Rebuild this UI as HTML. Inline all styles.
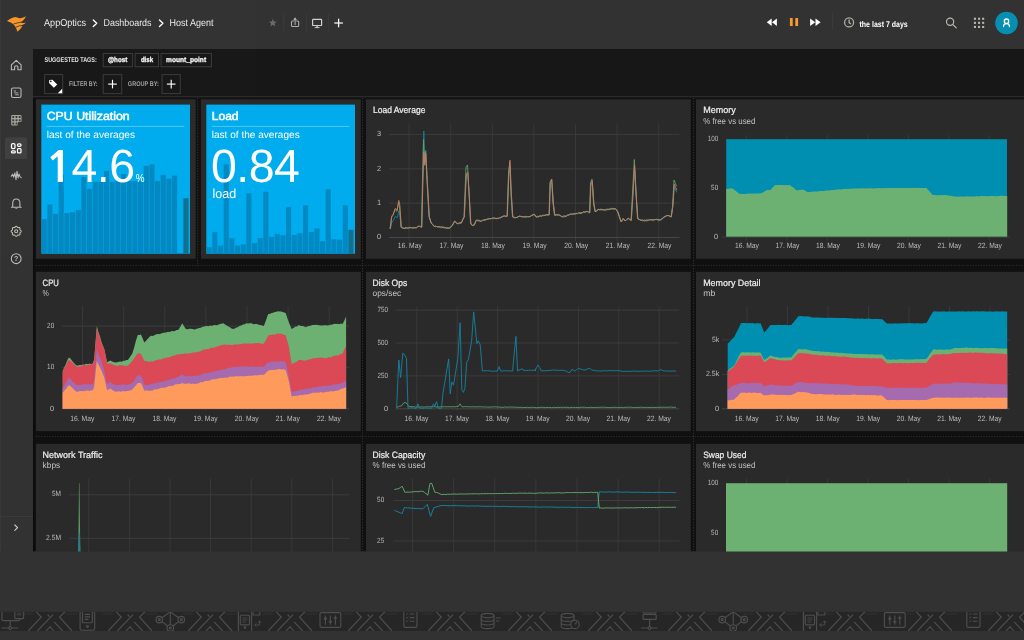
<!DOCTYPE html>
<html lang="en"><head><meta charset="utf-8"><title>AppOptics - Host Agent</title>
<style>
html,body{margin:0;padding:0;background:#333;width:1024px;height:640px;overflow:hidden;font-family:"Liberation Sans",sans-serif;}
svg{display:block;position:absolute;left:0;top:0;will-change:transform;opacity:0.999}
</style></head><body>
<svg width="1024" height="640" viewBox="0 0 1024 640" font-family="Liberation Sans, sans-serif" text-rendering="geometricPrecision">
<rect x="0.00" y="0.00" width="1024.00" height="640.00" fill="#111111"/>
<rect x="33.00" y="49.00" width="991.00" height="48.00" fill="#181818"/>
<line x1="33.00" y1="96.80" x2="1024.00" y2="96.80" stroke="#323232" stroke-width="1"/>
<rect x="0.00" y="0.00" width="1024.00" height="49.00" fill="#333333"/>
<rect x="0.00" y="49.00" width="33.00" height="503.00" fill="#333333"/>
<rect x="0.00" y="0.00" width="1.00" height="552.00" fill="#3a3a3a"/>
<rect x="0.00" y="551.50" width="1024.00" height="89.00" fill="#333333"/>
<path fill="#f8962b" d="M6.9,20.9 C10,18.9 12.8,17.4 15.2,17.1 C16.8,17.2 18.2,18.3 19.6,18.2 C22,18.0 24.4,17.2 26.1,15.9 C25.0,18.8 23,21.0 20.4,22.4 C22,22.9 24,23.1 26.1,22.8 C23.5,24.6 21,25.7 18.6,26.1 C20,26.3 21.2,26.3 22.5,25.9 C21,28.4 19.4,30.2 17.4,31.7 C16.7,29 15.5,26.6 13.9,24.7 C12,22.9 9.6,21.7 6.9,20.9 Z"/><path d="M13.6,23.9 L21.2,22.0 M15.6,27.4 L19.6,25.7" stroke="#333" stroke-width="0.8" fill="none"/>
<text x="44.0" y="26.3" font-size="10" fill="#ececec" textLength="42.0" lengthAdjust="spacingAndGlyphs">AppOptics</text>
<polyline points="93.30,20.00 96.70,23.20 93.30,26.40" fill="none" stroke="#fff" stroke-width="1.4" stroke-linecap="round" stroke-linejoin="round"/>
<text x="103.5" y="26.3" font-size="10" fill="#ececec" textLength="48.0" lengthAdjust="spacingAndGlyphs">Dashboards</text>
<polyline points="159.50,20.00 162.90,23.20 159.50,26.40" fill="none" stroke="#fff" stroke-width="1.4" stroke-linecap="round" stroke-linejoin="round"/>
<text x="169.6" y="26.3" font-size="10" fill="#ececec" textLength="43.8" lengthAdjust="spacingAndGlyphs">Host Agent</text>
<polygon points="272.80,18.80 273.86,21.54 276.79,21.70 274.51,23.56 275.27,26.40 272.80,24.80 270.33,26.40 271.09,23.56 268.81,21.70 271.74,21.54" fill="#6a6a6a"/>
<line x1="283.80" y1="14.00" x2="283.80" y2="31.00" stroke="#3c3c3c" stroke-width="1"/>
<line x1="306.40" y1="14.00" x2="306.40" y2="31.00" stroke="#3c3c3c" stroke-width="1"/>
<line x1="328.30" y1="14.00" x2="328.30" y2="31.00" stroke="#3c3c3c" stroke-width="1"/>
<g fill="none" stroke="#b0b0b0" stroke-width="1.05" stroke-linecap="round" stroke-linejoin="round"><path d="M293.4,21.0 H292.6 Q291.5,21.0 291.5,22.1 V25.4 Q291.5,26.5 292.6,26.5 H297.6 Q298.7,26.5 298.7,25.4 V22.1 Q298.7,21.0 297.6,21.0 H296.8"/><path d="M295.1,24.6 V18.6"/></g><path d="M293.1,20.2 L295.1,17.3 L297.1,20.2 Z" fill="#b0b0b0"/>
<g fill="none" stroke="#d0d0d0" stroke-width="1.2"><rect x="312.6" y="19.3" width="9" height="6.2" rx="0.6"/></g><path d="M315.2,27.7 L317.1,25.8 L319,27.7 Z" fill="#d0d0d0"/><line x1="314.6" y1="27.6" x2="319.6" y2="27.6" stroke="#d0d0d0" stroke-width="0.8"/>
<line x1="334.30" y1="23.00" x2="342.90" y2="23.00" stroke="#f4f4f4" stroke-width="1.3"/>
<line x1="338.60" y1="18.70" x2="338.60" y2="27.30" stroke="#f4f4f4" stroke-width="1.3"/>
<g fill="#fff"><path d="M771.7,18.4 V25.9 L766.8,22.15 Z"/><path d="M776.9,18.4 V25.9 L772.0,22.15 Z"/><path d="M810.1,18.4 V25.9 L815.2,22.15 Z"/><path d="M815.5,18.4 V25.9 L820.6,22.15 Z"/></g>
<rect x="789.90" y="18.00" width="2.80" height="8.00" fill="#f89a35"/>
<rect x="795.30" y="18.00" width="2.80" height="8.00" fill="#f89a35"/>
<line x1="832.30" y1="13.00" x2="832.30" y2="30.00" stroke="#3e3e3e" stroke-width="1"/>
<g fill="none" stroke="#aeaea8" stroke-width="1.3" stroke-linecap="round"><circle cx="849.1" cy="22.4" r="4.5"/><path d="M849.1,19.8 V22.6 L850.6,23.7"/></g>
<text x="859.5" y="26.7" font-size="8.3" fill="#fff" font-weight="bold" textLength="48.2" lengthAdjust="spacingAndGlyphs">the last 7 days</text>
<g fill="none" stroke="#b9b9b2" stroke-width="1.2" stroke-linecap="round"><circle cx="950.1" cy="21.8" r="3.6"/><path d="M952.9,24.6 L956.3,27.9"/></g>
<rect x="973.90" y="17.70" width="2.10" height="2.10" fill="#b6b6ae"/>
<rect x="973.90" y="21.80" width="2.10" height="2.10" fill="#b6b6ae"/>
<rect x="973.90" y="25.90" width="2.10" height="2.10" fill="#b6b6ae"/>
<rect x="978.00" y="17.70" width="2.10" height="2.10" fill="#b6b6ae"/>
<rect x="978.00" y="21.80" width="2.10" height="2.10" fill="#b6b6ae"/>
<rect x="978.00" y="25.90" width="2.10" height="2.10" fill="#b6b6ae"/>
<rect x="982.10" y="17.70" width="2.10" height="2.10" fill="#b6b6ae"/>
<rect x="982.10" y="21.80" width="2.10" height="2.10" fill="#b6b6ae"/>
<rect x="982.10" y="25.90" width="2.10" height="2.10" fill="#b6b6ae"/>
<circle cx="1006.5" cy="23" r="11.3" fill="#0890b2"/>
<g fill="none" stroke="#fff" stroke-width="1.3" stroke-linecap="round"><circle cx="1006.5" cy="21.2" r="2.2"/><path d="M1003.5,26.6 C1003.5,22.6 1009.5,22.6 1009.5,26.6"/></g>
<text x="44.5" y="62.0" font-size="6.8" fill="#e4e4e4" font-weight="bold" textLength="52.3" lengthAdjust="spacingAndGlyphs">SUGGESTED TAGS:</text>
<rect x="103.2" y="53.5" width="29.2" height="13.2" fill="none" stroke="#3c3c3c" stroke-width="1"/>
<text x="108.0" y="62.1" font-size="7.2" fill="#fff" font-weight="bold" textLength="19.3" lengthAdjust="spacingAndGlyphs" stroke="#fff" stroke-width="0.25">@host</text>
<rect x="135.1" y="53.5" width="23.4" height="13.2" fill="none" stroke="#3c3c3c" stroke-width="1"/>
<text x="140.9" y="62.1" font-size="7.2" fill="#fff" font-weight="bold" textLength="12.2" lengthAdjust="spacingAndGlyphs" stroke="#fff" stroke-width="0.25">disk</text>
<rect x="161.1" y="53.5" width="50.3" height="13.2" fill="none" stroke="#3c3c3c" stroke-width="1"/>
<text x="166.1" y="62.1" font-size="7.2" fill="#fff" font-weight="bold" textLength="40.0" lengthAdjust="spacingAndGlyphs" stroke="#fff" stroke-width="0.25">mount_point</text>
<rect x="44.6" y="74.6" width="18.1" height="19" fill="none" stroke="#3c3c3c" stroke-width="1"/>
<rect x="103.2" y="74.6" width="18.5" height="19" fill="none" stroke="#3c3c3c" stroke-width="1"/>
<rect x="162.1" y="74.6" width="18.2" height="19" fill="none" stroke="#3c3c3c" stroke-width="1"/>
<g transform="translate(53.0,83.6) rotate(-45)"><path d="M-2.4,-3.2 L0,-5.2 L2.4,-3.2 V3.6 H-2.4 Z" fill="#fff"/><circle cx="0" cy="-3.1" r="0.8" fill="#181818"/></g>
<path d="M62.2,88.8 V93.2 H57.8 Z" fill="#fff"/>
<text x="69.0" y="86.2" font-size="6.8" fill="#a4a4a4" font-weight="bold" textLength="28.6" lengthAdjust="spacingAndGlyphs">FILTER BY:</text>
<text x="127.8" y="86.2" font-size="6.8" fill="#a4a4a4" font-weight="bold" textLength="31.1" lengthAdjust="spacingAndGlyphs">GROUP BY:</text>
<line x1="108.20" y1="84.10" x2="116.80" y2="84.10" stroke="#fff" stroke-width="1.15"/>
<line x1="112.50" y1="79.80" x2="112.50" y2="88.40" stroke="#fff" stroke-width="1.15"/>
<line x1="166.90" y1="84.10" x2="175.50" y2="84.10" stroke="#fff" stroke-width="1.15"/>
<line x1="171.20" y1="79.80" x2="171.20" y2="88.40" stroke="#fff" stroke-width="1.15"/>
<g fill="none" stroke="#bcbcb4" stroke-width="1.1" stroke-linecap="round" stroke-linejoin="round"><path d="M11.4,64.9 L16.25,60.4 L21.1,64.9 V69.7 H17.9 V66.9 C17.9,65.3 14.6,65.3 14.6,66.9 V69.7 H11.4 Z"/></g>
<g fill="none" stroke="#bcbcb4" stroke-width="1.1" stroke-linecap="round" stroke-linejoin="round"><rect x="11.5" y="88" width="9.5" height="9.5" rx="1.6"/><path d="M14,91 H15.6 M14.6,92.9 H18 M15.6,94.8 H18.4" stroke-width="0.9"/></g>
<path d="M12.3,114.9 H20.4 Q21.5,114.9 21.5,116 V121 Q21.5,122.1 20.4,122.1 H18.9 Q17.9,122.1 17.9,123.1 V124.5 Q17.9,125.6 16.8,125.6 H12.3 Q11.2,125.6 11.2,124.5 V116 Q11.2,114.9 12.3,114.9 Z" fill="#a6a69e"/>
<rect x="12.35" y="116.00" width="1.9" height="2.0" rx="0.4" fill="#3c3c3a"/>
<rect x="12.35" y="119.30" width="1.9" height="2.0" rx="0.4" fill="#3c3c3a"/>
<rect x="12.35" y="122.60" width="1.9" height="2.0" rx="0.4" fill="#3c3c3a"/>
<rect x="15.55" y="116.00" width="1.9" height="2.0" rx="0.4" fill="#3c3c3a"/>
<rect x="15.55" y="119.30" width="1.9" height="2.0" rx="0.4" fill="#3c3c3a"/>
<rect x="15.55" y="122.60" width="1.9" height="2.0" rx="0.4" fill="#3c3c3a"/>
<rect x="18.75" y="116.00" width="1.9" height="2.0" rx="0.4" fill="#3c3c3a"/>
<rect x="18.75" y="119.30" width="1.9" height="2.0" rx="0.4" fill="#3c3c3a"/>
<rect x="5" y="137.3" width="22" height="21.8" rx="1.5" fill="#414141"/>
<g fill="none" stroke="#fff" stroke-width="1.25"><rect x="11.5" y="143.7" width="3.5" height="4.9" rx="1.3"/><rect x="17.5" y="143.9" width="3.5" height="2.5" rx="1.2"/><rect x="11.5" y="150.8" width="3.8" height="2.0" rx="0.9"/><rect x="17.5" y="148.7" width="3.5" height="4.2" rx="0.9"/></g>
<g fill="none" stroke="#bcbcb4" stroke-width="1.1" stroke-linecap="round" stroke-linejoin="round"><path d="M11.2,176.3 L12.6,174.2 L13.6,177.2 L14.9,172.8 L16.0,179.6 L17.0,171.4 L18.1,178.0 L19.0,174.0 L20.0,176.6 L21.2,177.6"/></g>
<g fill="none" stroke="#bcbcb4" stroke-width="1.1" stroke-linecap="round" stroke-linejoin="round"><path d="M11.4,207.2 H21.2 M12.7,207 V203.3 C12.7,197.6 19.9,197.6 19.9,203.3 V207"/><path d="M15.5,208.3 Q16.3,209.2 17.1,208.3" stroke-width="0.9"/></g>
<g fill="none" stroke="#bcbcb4" stroke-width="1.1" stroke-linecap="round" stroke-linejoin="round"><polygon points="21.25,231.30 21.08,231.78 20.66,232.19 20.22,232.52 19.94,232.85 19.90,233.28 19.98,233.83 19.99,234.41 19.77,234.87 19.31,235.09 18.73,235.08 18.18,235.00 17.75,235.04 17.42,235.32 17.09,235.76 16.68,236.18 16.20,236.35 15.72,236.18 15.31,235.76 14.98,235.32 14.65,235.04 14.22,235.00 13.67,235.08 13.09,235.09 12.63,234.87 12.41,234.41 12.42,233.83 12.50,233.28 12.46,232.85 12.18,232.52 11.74,232.19 11.32,231.78 11.15,231.30 11.32,230.82 11.74,230.41 12.18,230.08 12.46,229.75 12.50,229.32 12.42,228.77 12.41,228.19 12.63,227.73 13.09,227.51 13.67,227.52 14.22,227.60 14.65,227.56 14.98,227.28 15.31,226.84 15.72,226.42 16.20,226.25 16.68,226.42 17.09,226.84 17.42,227.28 17.75,227.56 18.18,227.60 18.73,227.52 19.31,227.51 19.77,227.73 19.99,228.19 19.98,228.77 19.90,229.32 19.94,229.75 20.22,230.08 20.66,230.41 21.08,230.82"/><circle cx="16.2" cy="231.3" r="1.5"/></g>
<g fill="none" stroke="#bcbcb4" stroke-width="1.1" stroke-linecap="round" stroke-linejoin="round"><circle cx="16.2" cy="258.7" r="4.9"/></g>
<text x="16.2" y="261.3" font-size="7" fill="#bcbcb4" font-weight="bold" text-anchor="middle">?</text>
<line x1="0.00" y1="516.40" x2="33.00" y2="516.40" stroke="#3e3e3e" stroke-width="1"/>
<polyline points="14.80,525.00 17.60,527.70 14.80,530.40" fill="none" stroke="#d0d0d0" stroke-width="1.1" stroke-linecap="round" stroke-linejoin="round"/>
<line x1="33.00" y1="265.40" x2="1024.00" y2="265.40" stroke="#303030" stroke-width="1" stroke-dasharray="1.2 1.5"/>
<line x1="33.00" y1="436.40" x2="1024.00" y2="436.40" stroke="#303030" stroke-width="1" stroke-dasharray="1.2 1.5"/>
<line x1="197.70" y1="98.00" x2="197.70" y2="266.00" stroke="#383838" stroke-width="1" stroke-dasharray="1.0 1.7"/>
<line x1="362.50" y1="98.00" x2="362.50" y2="552.00" stroke="#383838" stroke-width="1" stroke-dasharray="1.0 1.7"/>
<line x1="693.50" y1="98.00" x2="693.50" y2="552.00" stroke="#383838" stroke-width="1" stroke-dasharray="1.0 1.7"/>
<line x1="33.60" y1="98.00" x2="33.60" y2="552.00" stroke="#0a0a0a" stroke-width="1.2"/>
<rect x="36.00" y="99.30" width="159.60" height="159.50" fill="#2b2b2b"/>
<rect x="201.00" y="99.30" width="159.80" height="159.50" fill="#2b2b2b"/>
<rect x="366.00" y="99.30" width="324.70" height="159.50" fill="#2b2b2b"/>
<rect x="696.00" y="99.30" width="330.00" height="159.50" fill="#2b2b2b"/>
<rect x="36.00" y="271.80" width="324.80" height="159.30" fill="#2b2b2b"/>
<rect x="366.00" y="271.80" width="324.70" height="159.30" fill="#2b2b2b"/>
<rect x="696.00" y="271.80" width="330.00" height="159.30" fill="#2b2b2b"/>
<rect x="36.00" y="443.80" width="324.80" height="159.50" fill="#2b2b2b"/>
<rect x="366.00" y="443.80" width="324.70" height="159.50" fill="#2b2b2b"/>
<rect x="696.00" y="443.80" width="330.00" height="159.50" fill="#2b2b2b"/>
<rect x="41.30" y="104.60" width="148.70" height="149.10" fill="#00adee"/>
<rect x="41.65" y="219.06" width="5.12" height="34.64" fill="#0389c3"/>
<rect x="47.32" y="204.53" width="5.12" height="49.17" fill="#0389c3"/>
<rect x="52.99" y="213.91" width="5.12" height="39.79" fill="#0389c3"/>
<rect x="58.66" y="174.69" width="5.12" height="79.01" fill="#0389c3"/>
<rect x="64.33" y="213.12" width="5.12" height="40.57" fill="#0389c3"/>
<rect x="70.00" y="212.34" width="5.12" height="41.36" fill="#0389c3"/>
<rect x="75.67" y="210.00" width="5.12" height="43.70" fill="#0389c3"/>
<rect x="81.33" y="177.19" width="5.12" height="76.51" fill="#0389c3"/>
<rect x="87.00" y="188.91" width="5.12" height="64.79" fill="#0389c3"/>
<rect x="92.67" y="181.88" width="5.12" height="71.82" fill="#0389c3"/>
<rect x="98.34" y="181.88" width="5.12" height="71.82" fill="#0389c3"/>
<rect x="104.01" y="170.94" width="5.12" height="82.76" fill="#0389c3"/>
<rect x="109.68" y="181.88" width="5.12" height="71.82" fill="#0389c3"/>
<rect x="115.35" y="181.09" width="5.12" height="72.61" fill="#0389c3"/>
<rect x="121.02" y="174.06" width="5.12" height="79.64" fill="#0389c3"/>
<rect x="126.69" y="181.09" width="5.12" height="72.61" fill="#0389c3"/>
<rect x="132.36" y="181.09" width="5.12" height="72.61" fill="#0389c3"/>
<rect x="138.03" y="181.09" width="5.12" height="72.61" fill="#0389c3"/>
<rect x="143.70" y="165.94" width="5.12" height="87.76" fill="#0389c3"/>
<rect x="149.37" y="164.38" width="5.12" height="89.32" fill="#0389c3"/>
<rect x="155.03" y="181.09" width="5.12" height="72.61" fill="#0389c3"/>
<rect x="160.70" y="174.84" width="5.12" height="78.86" fill="#0389c3"/>
<rect x="166.37" y="178.75" width="5.12" height="74.95" fill="#0389c3"/>
<rect x="172.04" y="175.62" width="5.12" height="78.07" fill="#0389c3"/>
<rect x="183.38" y="198.28" width="5.12" height="55.42" fill="#13708f"/>
<text x="46.7" y="119.9" font-size="11.7" fill="#fff" textLength="83.0" lengthAdjust="spacingAndGlyphs" stroke="#fff" stroke-width="0.5">CPU Utilization</text>
<line x1="46.70" y1="126.40" x2="184.40" y2="126.40" stroke="#5cc8f3" stroke-width="0.9"/>
<text x="46.7" y="137.9" font-size="10.2" fill="#fff" textLength="88.3" lengthAdjust="spacingAndGlyphs">last of the averages</text>
<polygon points="62.9,150.0 62.9,182.0 57.7,182.0 57.7,156.2 52.7,160.4 50.3,157.3 58.7,150.0" fill="#fff"/>
<text x="71.4" y="182.0" font-size="46.5" fill="#fff" textLength="63.6" lengthAdjust="spacing">4.6</text>
<text x="135.8" y="182.0" font-size="11.5" fill="#fff" textLength="8.8" lengthAdjust="spacingAndGlyphs">%</text>
<rect x="206.30" y="104.60" width="148.70" height="149.10" fill="#00adee"/>
<rect x="206.65" y="247.19" width="5.12" height="6.51" fill="#0389c3"/>
<rect x="212.32" y="232.19" width="5.12" height="21.51" fill="#0389c3"/>
<rect x="217.99" y="245.62" width="5.12" height="8.07" fill="#0389c3"/>
<rect x="223.66" y="164.38" width="5.12" height="89.32" fill="#0389c3"/>
<rect x="229.33" y="238.12" width="5.12" height="15.57" fill="#0389c3"/>
<rect x="235.00" y="245.62" width="5.12" height="8.07" fill="#0389c3"/>
<rect x="240.67" y="244.38" width="5.12" height="9.32" fill="#0389c3"/>
<rect x="246.33" y="193.28" width="5.12" height="60.42" fill="#0389c3"/>
<rect x="252.00" y="243.12" width="5.12" height="10.57" fill="#0389c3"/>
<rect x="257.67" y="238.12" width="5.12" height="15.57" fill="#0389c3"/>
<rect x="263.34" y="191.72" width="5.12" height="61.98" fill="#0389c3"/>
<rect x="269.01" y="236.88" width="5.12" height="16.82" fill="#0389c3"/>
<rect x="274.68" y="233.91" width="5.12" height="19.79" fill="#0389c3"/>
<rect x="280.35" y="235.31" width="5.12" height="18.39" fill="#0389c3"/>
<rect x="286.02" y="206.88" width="5.12" height="46.82" fill="#0389c3"/>
<rect x="291.69" y="235.00" width="5.12" height="18.70" fill="#0389c3"/>
<rect x="297.36" y="233.12" width="5.12" height="20.57" fill="#0389c3"/>
<rect x="303.03" y="205.31" width="5.12" height="48.39" fill="#0389c3"/>
<rect x="308.70" y="231.88" width="5.12" height="21.82" fill="#0389c3"/>
<rect x="314.37" y="228.44" width="5.12" height="25.26" fill="#0389c3"/>
<rect x="320.03" y="241.25" width="5.12" height="12.45" fill="#0389c3"/>
<rect x="325.70" y="189.22" width="5.12" height="64.48" fill="#0389c3"/>
<rect x="331.37" y="239.22" width="5.12" height="14.48" fill="#0389c3"/>
<rect x="337.04" y="239.69" width="5.12" height="14.01" fill="#0389c3"/>
<rect x="342.71" y="205.31" width="5.12" height="48.39" fill="#0389c3"/>
<rect x="348.38" y="229.84" width="5.12" height="23.86" fill="#13708f"/>
<text x="211.7" y="119.9" font-size="11.7" fill="#fff" textLength="26.9" lengthAdjust="spacingAndGlyphs" stroke="#fff" stroke-width="0.5">Load</text>
<line x1="211.70" y1="126.40" x2="349.40" y2="126.40" stroke="#5cc8f3" stroke-width="0.9"/>
<text x="211.7" y="137.9" font-size="10.2" fill="#fff" textLength="88.0" lengthAdjust="spacingAndGlyphs">last of the averages</text>
<text x="211.0" y="182.0" font-size="46.5" fill="#fff" textLength="88.8" lengthAdjust="spacing">0.84</text>
<text x="212.4" y="198.0" font-size="13" fill="#fff" textLength="23.8" lengthAdjust="spacingAndGlyphs">load</text>
<text x="373.0" y="113.1" font-size="9.2" fill="#f0f0f0" textLength="52.4" lengthAdjust="spacingAndGlyphs" stroke="#f0f0f0" stroke-width="0.22">Load Average</text>
<line x1="409.10" y1="124.40" x2="409.10" y2="241.40" stroke="#3b3b3b" stroke-width="0.9"/>
<line x1="450.70" y1="124.40" x2="450.70" y2="241.40" stroke="#3b3b3b" stroke-width="0.9"/>
<line x1="492.30" y1="124.40" x2="492.30" y2="241.40" stroke="#3b3b3b" stroke-width="0.9"/>
<line x1="533.90" y1="124.40" x2="533.90" y2="241.40" stroke="#3b3b3b" stroke-width="0.9"/>
<line x1="575.50" y1="124.40" x2="575.50" y2="241.40" stroke="#3b3b3b" stroke-width="0.9"/>
<line x1="617.10" y1="124.40" x2="617.10" y2="241.40" stroke="#3b3b3b" stroke-width="0.9"/>
<line x1="658.70" y1="124.40" x2="658.70" y2="241.40" stroke="#3b3b3b" stroke-width="0.9"/>
<line x1="389.00" y1="134.40" x2="679.50" y2="134.40" stroke="#404040" stroke-width="0.9"/>
<line x1="389.00" y1="168.80" x2="679.50" y2="168.80" stroke="#404040" stroke-width="0.9"/>
<line x1="389.00" y1="203.10" x2="679.50" y2="203.10" stroke="#404040" stroke-width="0.9"/>
<line x1="389.00" y1="237.50" x2="679.50" y2="237.50" stroke="#4b4b4b" stroke-width="0.9"/>
<text x="377.1" y="136.1" font-size="7.5" fill="#bdbdbd" textLength="4.1" lengthAdjust="spacingAndGlyphs">3</text>
<text x="377.1" y="170.5" font-size="7.5" fill="#bdbdbd" textLength="4.1" lengthAdjust="spacingAndGlyphs">2</text>
<text x="377.1" y="204.8" font-size="7.5" fill="#bdbdbd" textLength="4.1" lengthAdjust="spacingAndGlyphs">1</text>
<text x="377.1" y="239.2" font-size="7.5" fill="#bdbdbd" textLength="4.1" lengthAdjust="spacingAndGlyphs">0</text>
<text x="397.8" y="248.3" font-size="7.6" fill="#bdbdbd" textLength="24.0" lengthAdjust="spacingAndGlyphs">16. May</text>
<text x="439.4" y="248.3" font-size="7.6" fill="#bdbdbd" textLength="24.0" lengthAdjust="spacingAndGlyphs">17. May</text>
<text x="481.0" y="248.3" font-size="7.6" fill="#bdbdbd" textLength="24.0" lengthAdjust="spacingAndGlyphs">18. May</text>
<text x="522.6" y="248.3" font-size="7.6" fill="#bdbdbd" textLength="24.0" lengthAdjust="spacingAndGlyphs">19. May</text>
<text x="564.2" y="248.3" font-size="7.6" fill="#bdbdbd" textLength="24.0" lengthAdjust="spacingAndGlyphs">20. May</text>
<text x="605.8" y="248.3" font-size="7.6" fill="#bdbdbd" textLength="24.0" lengthAdjust="spacingAndGlyphs">21. May</text>
<text x="647.4" y="248.3" font-size="7.6" fill="#bdbdbd" textLength="24.0" lengthAdjust="spacingAndGlyphs">22. May</text>
<polyline points="390.3,228.9 391.8,222.2 393.3,220.7 395.3,216.5 397.3,217.7 398.8,210.8 399.8,214.0 401.3,227.2 403.3,228.2 404.7,227.9 406.1,227.5 407.5,228.0 408.9,227.2 410.3,227.5 411.5,227.6 412.7,227.5 413.9,227.2 415.1,227.8 416.3,227.9 417.8,226.5 419.3,226.2 420.6,226.6 421.8,227.2 422.8,173.6 423.8,131.0 424.8,162.7 425.8,150.3 427.3,180.5 429.3,216.9 431.3,223.1 432.8,224.3 434.3,226.5 435.5,226.1 436.7,226.7 437.9,227.3 439.1,226.6 440.3,227.2 441.6,227.0 442.9,227.6 444.2,228.2 445.4,227.9 446.7,227.8 448.0,228.6 449.3,228.2 450.8,226.3 452.3,225.5 453.6,223.7 454.8,221.0 456.1,222.1 457.3,223.8 458.6,223.1 460.0,222.8 461.3,223.1 462.8,219.7 464.3,216.9 466.3,175.8 467.8,174.2 469.3,197.5 470.8,223.1 472.3,225.5 474.3,225.1 476.3,220.3 477.6,220.9 479.0,220.4 480.3,221.0 481.5,220.8 482.7,220.6 483.9,220.0 485.1,220.0 486.3,219.6 487.5,218.8 488.7,218.5 489.9,218.4 491.1,218.7 492.3,218.3 493.5,218.2 494.7,218.2 495.9,218.6 497.1,218.5 498.3,218.6 499.5,217.8 500.7,217.8 501.9,217.2 503.1,216.1 504.3,215.8 505.8,216.1 507.3,216.2 508.8,176.8 510.0,165.6 511.3,195.9 512.8,216.9 514.5,217.3 516.3,217.6 517.8,217.3 519.3,216.2 520.6,216.7 522.0,216.4 523.3,216.9 524.7,217.4 526.1,216.3 527.5,216.6 528.9,216.9 530.3,216.5 531.6,215.3 533.0,214.9 534.3,214.1 536.3,216.9 537.6,216.0 539.0,216.4 540.3,215.8 541.5,216.0 542.7,215.5 543.9,215.7 545.1,214.8 546.3,214.8 547.8,215.1 549.3,214.8 550.3,184.2 551.8,180.8 553.3,203.1 554.8,215.2 556.5,215.1 558.3,214.8 559.6,215.6 561.0,216.1 562.3,216.9 563.6,217.1 565.0,217.0 566.3,216.2 567.6,215.5 569.0,215.0 570.3,214.1 571.5,213.5 572.7,214.1 573.9,213.9 575.1,214.2 576.3,213.4 577.5,213.7 578.7,212.9 579.9,212.9 581.1,213.1 582.3,212.8 583.5,211.8 584.8,212.0 586.0,211.3 587.3,211.4 588.5,211.6 589.8,212.8 590.8,185.8 592.3,182.5 593.8,203.1 595.3,211.7 596.8,210.0 598.3,209.3 599.5,209.8 600.7,209.1 601.9,209.4 603.1,209.7 604.3,210.0 605.5,210.2 606.7,209.1 607.9,209.3 609.1,209.2 610.3,209.0 611.5,209.3 612.8,209.2 614.0,209.2 615.3,208.6 616.5,209.9 617.8,211.7 619.3,216.2 621.3,222.0 623.3,218.6 625.3,221.0 626.8,219.5 628.3,218.3 629.8,219.1 631.3,220.3 632.8,198.3 634.6,168.9 636.3,198.3 637.8,218.6 639.5,219.9 641.3,220.3 642.7,220.9 644.1,219.9 645.5,219.9 646.9,220.0 648.3,220.3 649.7,219.9 651.1,220.0 652.5,220.0 653.9,219.5 655.3,219.6 656.5,219.1 657.8,219.7 659.0,219.7 660.3,220.0 661.6,219.0 663.0,218.5 664.3,216.9 665.6,216.6 667.0,216.0 668.3,215.5 669.8,216.3 671.3,216.9 672.8,206.6 674.3,186.9 675.8,190.2 676.8,192.4" fill="none" stroke="#1484a4" stroke-width="0.85" stroke-linejoin="round" opacity="1"/>
<polyline points="390.0,228.9 391.5,217.3 393.0,215.3 395.0,209.7 397.0,211.4 398.5,202.2 399.5,206.5 401.0,227.2 403.0,228.2 404.4,228.3 405.8,227.4 407.2,228.3 408.6,228.0 410.0,227.5 411.2,228.1 412.4,228.0 413.6,227.6 414.8,227.7 416.0,227.9 417.5,226.5 419.0,226.2 420.2,226.8 421.5,227.2 422.5,178.7 423.5,139.5 424.5,163.8 425.5,151.5 427.0,181.4 429.0,216.9 431.0,223.1 432.5,224.3 434.0,226.5 435.2,226.1 436.4,226.4 437.6,226.5 438.8,226.9 440.0,227.2 441.3,226.8 442.6,226.9 443.9,227.2 445.1,227.3 446.4,227.8 447.7,227.5 449.0,228.2 450.5,227.3 452.0,225.5 453.2,223.4 454.5,221.0 455.8,222.0 457.0,223.8 458.3,223.2 459.7,223.1 461.0,223.1 462.5,219.8 464.0,216.9 466.0,166.9 467.5,165.0 469.0,191.7 470.5,223.1 472.0,225.5 474.0,225.1 476.0,220.3 477.3,220.1 478.7,221.2 480.0,221.0 481.2,221.3 482.4,220.4 483.6,220.2 484.8,219.4 486.0,219.6 487.2,218.9 488.4,218.9 489.6,218.5 490.8,218.9 492.0,218.3 493.2,217.9 494.4,217.8 495.6,219.0 496.8,218.6 498.0,218.6 499.2,217.6 500.4,217.5 501.6,216.4 502.8,216.4 504.0,215.8 505.5,216.6 507.0,216.2 508.5,174.2 509.7,162.5 511.0,194.2 512.5,216.9 514.2,217.7 516.0,217.6 517.5,217.1 519.0,216.2 520.3,216.1 521.7,216.5 523.0,216.9 524.4,216.4 525.8,217.1 527.2,216.7 528.6,216.9 530.0,216.5 531.3,215.5 532.7,214.6 534.0,214.1 536.0,216.9 537.3,216.9 538.7,216.8 540.0,215.8 541.2,216.1 542.4,215.8 543.6,215.6 544.8,215.3 546.0,214.8 547.5,214.5 549.0,214.8 550.0,182.5 551.5,179.1 553.0,203.1 554.5,215.2 556.2,215.0 558.0,214.8 559.3,215.3 560.7,215.6 562.0,216.9 563.3,216.1 564.7,216.2 566.0,216.2 567.3,215.2 568.7,215.0 570.0,214.1 571.2,214.5 572.4,213.8 573.6,214.2 574.8,214.2 576.0,213.4 577.2,213.8 578.4,213.0 579.6,212.7 580.8,212.6 582.0,212.8 583.2,212.0 584.5,211.7 585.8,211.9 587.0,211.4 588.2,212.5 589.5,212.8 590.5,182.6 592.0,179.1 593.5,203.1 595.0,211.7 596.5,210.9 598.0,209.3 599.2,209.4 600.4,209.8 601.6,210.1 602.8,209.4 604.0,210.0 605.2,210.0 606.4,210.1 607.6,209.7 608.8,209.5 610.0,209.0 611.2,208.9 612.5,208.4 613.8,209.1 615.0,208.6 616.2,210.0 617.5,211.7 619.0,216.2 621.0,222.0 623.0,218.6 625.0,221.0 626.5,220.0 628.0,218.3 629.5,219.8 631.0,220.3 632.5,193.0 634.3,159.5 636.0,193.0 637.5,218.6 639.2,219.3 641.0,220.3 642.4,220.2 643.8,220.9 645.2,220.6 646.6,219.9 648.0,220.3 649.4,219.7 650.8,219.6 652.2,220.4 653.6,220.1 655.0,219.6 656.2,219.3 657.5,220.2 658.8,220.5 660.0,220.0 661.3,219.1 662.7,217.7 664.0,216.9 665.3,216.5 666.7,215.5 668.0,215.5 669.5,215.6 671.0,216.9 672.5,206.6 674.0,180.0 675.5,183.7 676.5,186.3" fill="none" stroke="#62a56b" stroke-width="0.85" stroke-linejoin="round" opacity="1"/>
<polyline points="390.3,228.9 391.8,216.2 393.3,214.1 395.3,208.3 397.3,210.0 398.8,200.4 399.8,204.8 401.3,227.2 403.3,228.2 404.7,228.6 406.1,228.1 407.5,227.8 408.9,228.2 410.3,227.5 411.5,227.5 412.7,228.1 413.9,228.1 415.1,227.5 416.3,227.9 417.8,226.7 419.3,226.2 420.6,226.4 421.8,227.2 422.8,185.9 423.8,151.6 424.8,165.3 425.8,153.3 427.3,182.5 429.3,216.9 431.3,223.1 432.8,224.5 434.3,226.5 435.5,226.7 436.7,226.5 437.9,226.8 439.1,226.6 440.3,227.2 441.6,227.8 442.9,227.3 444.2,227.6 445.4,227.9 446.7,228.4 448.0,228.0 449.3,228.2 450.8,227.3 452.3,225.5 453.6,223.2 454.8,221.0 456.1,222.4 457.3,223.8 458.6,223.6 460.0,222.7 461.3,223.1 462.8,219.9 464.3,216.9 466.3,173.9 467.8,172.2 469.3,196.3 470.8,223.1 472.3,225.5 474.3,225.1 476.3,220.3 477.6,220.2 479.0,220.2 480.3,221.0 481.5,221.1 482.7,220.1 483.9,220.1 485.1,220.2 486.3,219.6 487.5,219.4 488.7,218.9 489.9,218.8 491.1,218.6 492.3,218.3 493.5,218.7 494.7,217.9 495.9,218.5 497.1,218.2 498.3,218.6 499.5,217.8 500.7,217.8 501.9,217.0 503.1,216.5 504.3,215.8 505.8,216.3 507.3,216.2 508.8,172.2 510.0,160.2 511.3,192.8 512.8,216.9 514.5,217.7 516.3,217.6 517.8,216.8 519.3,216.2 520.6,216.6 522.0,216.7 523.3,216.9 524.7,216.8 526.1,217.0 527.5,216.6 528.9,216.6 530.3,216.5 531.6,215.7 533.0,215.5 534.3,214.1 536.3,216.9 537.6,216.8 539.0,216.6 540.3,215.8 541.5,216.2 542.7,215.1 543.9,215.3 545.1,215.6 546.3,214.8 547.8,215.2 549.3,214.8 550.3,182.5 551.8,179.1 553.3,203.1 554.8,215.2 556.5,214.6 558.3,214.8 559.6,215.0 561.0,216.1 562.3,216.9 563.6,216.1 565.0,216.1 566.3,216.2 567.6,215.0 569.0,215.0 570.3,214.1 571.5,214.3 572.7,214.3 573.9,213.3 575.1,213.8 576.3,213.4 577.5,213.5 578.7,212.7 579.9,213.5 581.1,213.5 582.3,212.8 583.5,212.1 584.8,212.6 586.0,211.6 587.3,211.4 588.5,212.1 589.8,212.8 590.8,184.2 592.3,180.8 593.8,203.1 595.3,211.7 596.8,211.1 598.3,209.3 599.5,209.9 600.7,209.2 601.9,209.6 603.1,209.9 604.3,210.0 605.5,209.6 606.7,209.2 607.9,209.2 609.1,209.4 610.3,209.0 611.5,208.3 612.8,208.9 614.0,208.6 615.3,208.6 616.5,209.6 617.8,211.7 619.3,216.2 621.3,222.0 623.3,218.6 625.3,221.0 626.8,219.4 628.3,218.3 629.8,219.4 631.3,220.3 632.8,196.3 634.6,165.3 636.3,196.3 637.8,218.6 639.5,219.5 641.3,220.3 642.7,219.8 644.1,220.9 645.5,220.7 646.9,220.9 648.3,220.3 649.7,219.7 651.1,219.8 652.5,219.4 653.9,220.1 655.3,219.6 656.5,219.4 657.8,219.4 659.0,219.8 660.3,220.0 661.6,219.4 663.0,218.3 664.3,216.9 665.6,216.1 667.0,215.5 668.3,215.5 669.8,216.7 671.3,216.9 672.8,206.6 674.3,184.2 675.8,187.7 676.8,190.1" fill="none" stroke="#cf7963" stroke-width="0.9" stroke-linejoin="round" opacity="1"/>
<text x="703.2" y="113.1" font-size="9.2" fill="#f0f0f0" textLength="32.6" lengthAdjust="spacingAndGlyphs" stroke="#f0f0f0" stroke-width="0.22">Memory</text>
<text x="703.2" y="123.7" font-size="8.6" fill="#c4c4c4" textLength="52.2" lengthAdjust="spacingAndGlyphs">% free vs used</text>
<line x1="746.30" y1="135.00" x2="746.30" y2="240.20" stroke="#3b3b3b" stroke-width="0.9"/>
<line x1="786.80" y1="135.00" x2="786.80" y2="240.20" stroke="#3b3b3b" stroke-width="0.9"/>
<line x1="827.30" y1="135.00" x2="827.30" y2="240.20" stroke="#3b3b3b" stroke-width="0.9"/>
<line x1="867.80" y1="135.00" x2="867.80" y2="240.20" stroke="#3b3b3b" stroke-width="0.9"/>
<line x1="908.30" y1="135.00" x2="908.30" y2="240.20" stroke="#3b3b3b" stroke-width="0.9"/>
<line x1="948.80" y1="135.00" x2="948.80" y2="240.20" stroke="#3b3b3b" stroke-width="0.9"/>
<line x1="989.30" y1="135.00" x2="989.30" y2="240.20" stroke="#3b3b3b" stroke-width="0.9"/>
<text x="707.8" y="140.9" font-size="7.5" fill="#bdbdbd" textLength="10.4" lengthAdjust="spacingAndGlyphs">100</text>
<text x="711.1" y="189.9" font-size="7.5" fill="#bdbdbd" textLength="7.1" lengthAdjust="spacingAndGlyphs">50</text>
<text x="714.1" y="238.7" font-size="7.5" fill="#bdbdbd" textLength="4.1" lengthAdjust="spacingAndGlyphs">0</text>
<text x="735.0" y="248.3" font-size="7.6" fill="#bdbdbd" textLength="24.0" lengthAdjust="spacingAndGlyphs">16. May</text>
<text x="775.5" y="248.3" font-size="7.6" fill="#bdbdbd" textLength="24.0" lengthAdjust="spacingAndGlyphs">17. May</text>
<text x="816.0" y="248.3" font-size="7.6" fill="#bdbdbd" textLength="24.0" lengthAdjust="spacingAndGlyphs">18. May</text>
<text x="856.5" y="248.3" font-size="7.6" fill="#bdbdbd" textLength="24.0" lengthAdjust="spacingAndGlyphs">19. May</text>
<text x="897.0" y="248.3" font-size="7.6" fill="#bdbdbd" textLength="24.0" lengthAdjust="spacingAndGlyphs">20. May</text>
<text x="937.5" y="248.3" font-size="7.6" fill="#bdbdbd" textLength="24.0" lengthAdjust="spacingAndGlyphs">21. May</text>
<text x="978.0" y="248.3" font-size="7.6" fill="#bdbdbd" textLength="24.0" lengthAdjust="spacingAndGlyphs">22. May</text>
<rect x="726.20" y="139.20" width="280.80" height="97.90" fill="#0090b1"/>
<polygon points="726.2,188.9 728.2,188.7 730.1,188.6 732.1,188.3 733.6,189.2 735.2,190.4 736.7,191.8 738.2,192.8 739.8,194.0 741.3,193.7 742.9,194.0 744.5,193.9 746.0,193.9 747.6,193.6 749.1,193.8 750.7,193.5 752.3,193.7 753.8,193.5 755.4,193.4 757.0,193.5 758.5,193.6 760.1,193.3 761.6,193.3 763.5,192.1 765.3,191.1 767.1,190.0 768.8,189.9 770.4,190.0 772.6,187.5 774.8,185.2 776.3,185.1 777.8,185.0 779.4,185.1 780.9,185.1 782.4,185.1 784.0,185.3 785.5,185.1 787.0,185.2 788.6,185.1 790.1,185.2 791.7,186.5 793.4,187.6 795.0,189.0 796.7,190.5 798.3,190.0 799.9,190.1 801.6,189.8 803.2,189.6 805.4,190.8 807.6,192.2 809.1,192.1 810.6,192.1 812.1,191.6 813.7,191.8 815.2,191.5 816.7,191.4 818.2,191.4 819.7,191.1 821.2,191.0 822.7,190.9 824.3,190.9 825.8,190.5 827.3,190.5 828.9,190.5 830.4,190.3 832.0,190.1 833.5,189.9 835.1,189.8 836.7,189.5 838.2,189.4 839.8,189.3 841.4,189.4 842.9,189.1 844.5,188.9 846.0,188.8 847.6,189.0 849.2,188.7 850.7,188.8 852.2,188.7 853.8,188.5 855.3,188.4 856.8,188.4 858.4,188.5 859.9,188.3 861.4,188.4 863.0,188.3 864.5,188.5 866.0,188.3 867.7,188.5 869.3,188.3 871.0,188.2 872.6,188.5 874.2,188.2 875.9,188.3 877.4,188.2 878.9,188.0 880.5,188.2 882.0,188.2 883.5,188.2 885.0,188.1 886.6,188.2 888.1,188.0 889.6,188.1 891.1,188.0 892.7,188.1 894.2,187.9 895.7,187.9 897.2,188.0 898.8,188.0 900.3,188.1 901.8,188.1 903.3,188.1 904.9,188.1 906.4,188.1 907.9,188.1 909.4,187.9 911.0,187.9 912.5,188.1 914.0,187.8 915.5,188.0 917.1,188.0 918.6,187.7 920.1,188.0 921.6,188.0 923.2,187.9 924.7,187.9 926.2,187.8 927.9,189.8 929.5,191.3 931.1,193.3 932.8,195.1 934.4,195.1 936.1,195.2 937.7,195.2 939.3,195.2 941.0,195.1 942.6,195.2 944.3,195.1 945.9,195.1 947.4,195.4 949.0,195.6 950.5,195.8 952.0,196.1 953.6,196.6 955.1,196.5 956.6,196.4 958.2,196.7 959.7,196.5 961.2,196.5 962.8,196.5 964.3,196.5 965.8,196.4 967.4,196.2 968.9,196.5 970.4,196.5 972.0,196.4 973.5,196.4 975.0,196.4 976.5,196.1 978.1,196.4 979.6,196.2 981.1,196.1 982.7,196.1 984.2,196.3 985.7,196.1 987.3,196.3 988.8,196.3 990.3,196.1 991.9,196.1 993.4,196.1 994.9,196.2 996.5,196.2 998.0,196.1 999.5,196.1 1001.1,195.8 1002.6,195.8 1004.1,195.9 1005.7,196.0 1007.2,195.9 1007.2,237.1 726.2,237.1" fill="#6db273"/>
<line x1="722.00" y1="237.10" x2="1010.00" y2="237.10" stroke="#404040" stroke-width="0.9"/>
<text x="42.6" y="285.9" font-size="9.2" fill="#f0f0f0" textLength="16.3" lengthAdjust="spacingAndGlyphs" stroke="#f0f0f0" stroke-width="0.22">CPU</text>
<text x="42.6" y="295.8" font-size="8.6" fill="#c4c4c4" textLength="6.3" lengthAdjust="spacingAndGlyphs">%</text>
<line x1="82.60" y1="306.40" x2="82.60" y2="410.20" stroke="#3b3b3b" stroke-width="0.9"/>
<line x1="123.70" y1="306.40" x2="123.70" y2="410.20" stroke="#3b3b3b" stroke-width="0.9"/>
<line x1="164.80" y1="306.40" x2="164.80" y2="410.20" stroke="#3b3b3b" stroke-width="0.9"/>
<line x1="205.90" y1="306.40" x2="205.90" y2="410.20" stroke="#3b3b3b" stroke-width="0.9"/>
<line x1="247.00" y1="306.40" x2="247.00" y2="410.20" stroke="#3b3b3b" stroke-width="0.9"/>
<line x1="288.10" y1="306.40" x2="288.10" y2="410.20" stroke="#3b3b3b" stroke-width="0.9"/>
<line x1="329.20" y1="306.40" x2="329.20" y2="410.20" stroke="#3b3b3b" stroke-width="0.9"/>
<line x1="61.80" y1="326.10" x2="349.20" y2="326.10" stroke="#404040" stroke-width="0.9"/>
<line x1="61.80" y1="367.40" x2="349.20" y2="367.40" stroke="#404040" stroke-width="0.9"/>
<line x1="61.80" y1="408.80" x2="349.20" y2="408.80" stroke="#4b4b4b" stroke-width="0.9"/>
<text x="47.1" y="327.8" font-size="7.5" fill="#bdbdbd" textLength="7.1" lengthAdjust="spacingAndGlyphs">20</text>
<text x="47.1" y="369.1" font-size="7.5" fill="#bdbdbd" textLength="7.1" lengthAdjust="spacingAndGlyphs">10</text>
<text x="50.1" y="410.5" font-size="7.5" fill="#bdbdbd" textLength="4.1" lengthAdjust="spacingAndGlyphs">0</text>
<text x="70.3" y="420.6" font-size="7.6" fill="#bdbdbd" textLength="24.0" lengthAdjust="spacingAndGlyphs">16. May</text>
<text x="111.4" y="420.6" font-size="7.6" fill="#bdbdbd" textLength="24.0" lengthAdjust="spacingAndGlyphs">17. May</text>
<text x="152.5" y="420.6" font-size="7.6" fill="#bdbdbd" textLength="24.0" lengthAdjust="spacingAndGlyphs">18. May</text>
<text x="193.6" y="420.6" font-size="7.6" fill="#bdbdbd" textLength="24.0" lengthAdjust="spacingAndGlyphs">19. May</text>
<text x="234.7" y="420.6" font-size="7.6" fill="#bdbdbd" textLength="24.0" lengthAdjust="spacingAndGlyphs">20. May</text>
<text x="275.8" y="420.6" font-size="7.6" fill="#bdbdbd" textLength="24.0" lengthAdjust="spacingAndGlyphs">21. May</text>
<text x="316.9" y="420.6" font-size="7.6" fill="#bdbdbd" textLength="24.0" lengthAdjust="spacingAndGlyphs">22. May</text>
<polygon points="62.7,371.0 64.2,367.4 65.8,364.2 67.3,360.3 68.8,357.4 70.4,358.6 71.9,360.4 73.4,362.4 74.9,364.0 76.5,365.5 78.1,365.4 79.8,364.9 81.4,364.9 83.0,364.6 84.7,364.4 86.3,363.8 88.0,364.3 89.6,363.5 91.3,364.0 92.9,363.3 94.2,358.9 96.8,326.1 98.4,332.0 100.0,336.6 101.6,342.5 104.3,349.1 107.1,362.2 108.8,361.3 110.4,360.5 112.2,361.5 114.0,362.3 115.9,362.6 117.4,362.3 118.9,361.8 120.4,361.4 121.9,361.7 123.4,360.7 124.9,360.8 126.4,360.0 127.9,360.0 130.1,356.8 132.3,353.5 134.1,347.7 135.9,340.7 137.8,334.9 139.4,334.9 141.0,334.4 142.7,338.5 144.3,342.5 146.1,340.8 148.0,338.6 149.8,336.4 151.3,335.8 152.8,336.0 154.3,335.3 155.8,334.5 157.3,334.1 158.8,334.2 160.4,333.7 161.9,333.2 163.4,332.7 164.9,332.7 166.6,332.2 168.2,331.8 169.9,332.0 171.6,330.9 173.2,331.3 174.9,331.0 176.6,330.0 178.2,330.0 180.2,327.0 182.2,323.3 184.0,326.3 185.9,328.9 187.6,329.3 189.3,328.8 190.9,328.8 192.6,328.9 194.3,329.4 196.0,328.9 197.6,328.6 199.1,328.0 200.7,327.7 202.3,327.1 203.8,326.5 205.4,326.2 206.9,326.1 208.5,326.2 210.1,325.6 211.6,326.0 213.2,325.3 214.8,325.1 216.3,325.2 217.9,325.0 219.7,324.1 221.5,323.7 223.4,323.3 225.0,324.6 226.6,325.5 228.3,326.4 229.9,327.2 231.6,328.4 233.2,328.9 234.8,328.6 236.5,327.6 238.1,327.0 239.8,325.7 241.4,325.6 243.0,324.6 244.7,324.2 246.3,323.3 248.1,323.5 249.8,323.3 251.6,323.2 253.3,324.2 255.1,323.9 256.8,324.0 258.6,324.8 260.3,325.1 262.1,325.5 263.8,326.1 266.0,320.3 268.2,314.1 269.9,314.0 271.5,312.9 273.1,312.8 274.8,312.0 276.4,311.8 278.1,311.2 279.6,311.5 281.1,311.6 282.7,312.0 284.2,312.4 285.7,313.0 287.4,318.3 289.0,322.8 291.6,328.9 293.4,328.0 295.2,326.7 297.0,326.4 298.8,325.0 300.5,326.0 302.1,326.1 303.8,326.3 305.4,327.2 307.2,326.5 308.9,326.0 310.7,325.7 312.4,325.1 314.2,325.0 315.8,324.8 317.4,324.9 319.1,325.2 320.7,325.6 322.4,325.5 324.0,325.3 325.6,325.3 327.3,325.4 329.0,325.2 330.8,324.7 332.5,324.4 334.3,323.8 336.0,323.9 337.7,323.7 339.3,324.3 341.0,323.6 342.6,323.9 344.4,320.3 346.1,316.7 346.1,408.8 62.7,408.8" fill="#6db273"/>
<polygon points="62.7,371.4 64.2,368.6 65.8,365.8 67.3,362.3 68.8,359.6 70.4,360.8 71.9,362.2 73.4,363.7 74.9,365.1 76.5,366.6 78.1,366.7 79.8,366.4 81.4,366.1 83.0,365.1 84.7,364.9 86.3,365.2 88.0,365.1 89.6,364.5 91.3,364.3 92.9,364.0 94.2,360.0 96.8,328.3 98.4,332.9 100.0,338.4 101.6,343.6 104.3,349.5 107.1,363.3 108.8,363.7 110.4,363.3 112.2,364.3 114.0,365.1 115.9,365.5 117.4,365.9 118.9,365.3 120.4,365.1 121.9,365.2 123.4,365.5 124.9,365.7 126.4,365.9 127.9,365.5 130.1,363.5 132.3,361.1 134.1,358.5 135.9,356.0 137.8,353.0 139.4,353.4 141.0,353.9 142.7,357.6 144.3,361.1 146.1,360.9 148.0,361.8 149.8,361.8 151.3,361.2 152.8,361.5 154.3,360.9 155.8,360.2 157.3,359.7 158.8,359.4 160.4,359.4 161.9,359.2 163.4,358.3 164.9,358.3 166.6,357.4 168.2,357.4 169.9,357.0 171.6,356.3 173.2,355.7 174.9,355.6 176.6,354.6 178.2,354.6 180.2,354.0 182.2,353.9 184.0,353.6 185.9,353.5 187.6,353.7 189.3,353.2 190.9,353.3 192.6,352.7 194.3,352.3 196.0,352.4 197.6,351.7 199.1,351.8 200.7,351.1 202.3,350.3 203.8,349.6 205.4,349.5 206.9,349.1 208.5,348.9 210.1,348.3 211.6,347.7 213.2,347.7 214.8,347.6 216.3,346.6 217.9,346.5 219.7,345.5 221.5,345.1 223.4,344.7 225.0,344.6 226.6,344.9 228.3,344.4 229.9,345.0 231.6,344.9 233.2,344.7 234.8,344.6 236.5,344.2 238.1,344.7 239.8,344.0 241.4,344.3 243.0,343.6 244.7,343.5 246.3,343.6 248.1,343.8 249.8,343.3 251.6,343.8 253.3,343.3 255.1,343.2 256.8,343.0 258.6,343.1 260.3,343.4 262.1,343.7 263.8,343.6 266.0,340.0 268.2,335.5 269.9,334.9 271.5,334.8 273.1,334.4 274.8,334.8 276.4,333.7 278.1,333.8 279.6,333.6 281.1,333.8 282.7,334.3 284.2,335.0 285.7,334.9 287.4,341.2 289.0,346.9 291.6,364.0 293.4,363.2 295.2,362.4 297.0,361.4 298.8,360.0 300.5,360.0 302.1,360.0 303.8,360.7 305.4,360.5 307.2,360.2 308.9,359.2 310.7,359.3 312.4,358.6 314.2,358.3 315.8,358.1 317.4,358.0 319.1,357.8 320.7,357.6 322.4,357.8 324.0,357.8 325.6,358.3 327.3,357.8 329.0,357.1 330.8,357.4 332.5,356.3 334.3,356.0 336.0,355.6 337.7,355.4 339.3,354.8 341.0,353.9 342.6,353.5 344.4,349.2 346.1,345.8 346.1,408.8 62.7,408.8" fill="#dc4a57"/>
<polygon points="62.7,388.5 64.2,385.7 65.8,382.9 67.3,380.6 68.8,377.5 70.4,378.8 71.9,380.5 73.4,382.5 74.9,383.2 76.5,385.2 78.1,385.0 79.8,385.2 81.4,385.1 83.0,384.3 84.7,384.2 86.3,384.1 88.0,384.8 89.6,384.1 91.3,384.4 92.9,384.1 94.2,380.8 96.8,349.1 98.4,353.8 100.0,357.7 101.6,362.2 104.3,371.0 107.1,384.1 108.8,382.8 110.4,381.9 112.2,383.4 114.0,384.2 115.9,385.2 117.4,384.9 118.9,385.2 120.4,384.8 121.9,384.7 123.4,384.3 124.9,384.9 126.4,385.0 127.9,384.5 130.1,383.9 132.3,383.0 134.1,380.8 135.9,377.5 137.8,375.3 139.4,375.3 141.0,375.8 142.7,380.1 144.3,384.5 146.1,384.9 148.0,384.9 149.8,384.5 151.3,384.1 152.8,383.6 154.3,383.4 155.8,383.0 157.3,383.1 158.8,382.0 160.4,382.2 161.9,381.8 163.4,381.5 164.9,380.8 166.6,380.6 168.2,380.0 169.9,379.3 171.6,378.8 173.2,378.4 174.9,378.3 176.6,377.2 178.2,377.1 180.2,375.4 182.2,374.2 184.0,375.6 185.9,376.4 187.6,376.1 189.3,375.8 190.9,375.7 192.6,376.0 194.3,375.7 196.0,375.8 197.6,375.8 199.1,375.4 200.7,375.1 202.3,374.1 203.8,373.5 205.4,373.2 206.9,373.2 208.5,372.8 210.1,372.6 211.6,372.0 213.2,371.4 214.8,371.2 216.3,371.0 217.9,370.5 219.7,370.2 221.5,369.9 223.4,369.2 225.0,369.2 226.6,368.6 228.3,367.8 229.9,368.1 231.6,367.2 233.2,367.0 234.8,367.0 236.5,366.8 238.1,367.1 239.8,366.5 241.4,366.5 243.0,366.5 244.7,366.3 246.3,366.6 248.1,366.9 249.8,366.7 251.6,366.4 253.3,366.5 255.1,366.6 256.8,367.0 258.6,366.6 260.3,366.3 262.1,366.9 263.8,366.6 266.0,364.5 268.2,362.2 269.9,362.5 271.5,361.5 273.1,361.6 274.8,361.8 276.4,361.6 278.1,361.1 279.6,361.7 281.1,361.1 282.7,361.6 284.2,361.6 285.7,362.2 287.4,369.6 289.0,377.5 291.6,391.8 293.4,391.8 295.2,391.1 297.0,391.0 298.8,390.2 300.5,389.8 302.1,389.9 303.8,389.2 305.4,388.9 307.2,388.4 308.9,388.5 310.7,388.4 312.4,387.3 314.2,387.4 315.8,387.3 317.4,387.1 319.1,386.5 320.7,386.5 322.4,386.1 324.0,386.0 325.6,385.8 327.3,385.8 329.0,385.7 330.8,385.5 332.5,384.8 334.3,384.4 336.0,384.5 337.7,384.0 339.3,383.9 341.0,383.1 342.6,383.0 344.4,381.7 346.1,380.8 346.1,408.8 62.7,408.8" fill="#a76bb0"/>
<polygon points="62.7,392.8 64.2,390.7 65.8,389.3 67.3,387.1 68.8,385.2 70.4,386.1 71.9,387.5 73.4,389.0 74.9,390.5 76.5,391.8 78.1,391.7 79.8,391.1 81.4,391.0 83.0,391.3 84.7,390.9 86.3,390.6 88.0,390.5 89.6,390.9 91.3,390.2 92.9,390.2 94.2,386.3 96.8,361.1 98.4,364.5 100.0,367.6 101.6,371.0 104.3,377.5 107.1,390.2 108.8,389.3 110.4,388.5 112.2,389.9 114.0,391.1 115.9,391.8 117.4,391.5 118.9,391.3 120.4,391.7 121.9,391.2 123.4,390.9 124.9,391.6 126.4,391.1 127.9,391.1 130.1,390.6 132.3,389.6 134.1,387.3 135.9,385.5 137.8,383.0 139.4,383.0 141.0,383.0 142.7,386.5 144.3,390.7 146.1,390.2 148.0,390.7 149.8,390.7 151.3,390.5 152.8,390.4 154.3,389.3 155.8,389.5 157.3,388.9 158.8,388.7 160.4,388.0 161.9,387.8 163.4,387.7 164.9,387.4 166.6,387.3 168.2,386.2 169.9,386.1 171.6,386.0 173.2,385.7 174.9,384.6 176.6,384.2 178.2,384.1 180.2,383.9 182.2,383.0 184.0,383.8 185.9,383.7 187.6,383.6 189.3,383.3 190.9,384.0 192.6,383.6 194.3,384.0 196.0,383.7 197.6,383.4 199.1,383.1 200.7,382.1 202.3,382.3 203.8,381.4 205.4,381.1 206.9,380.8 208.5,380.8 210.1,380.5 211.6,379.6 213.2,379.3 214.8,379.2 216.3,379.0 217.9,378.6 219.7,378.3 221.5,377.8 223.4,378.0 225.0,377.5 226.6,377.7 228.3,377.6 229.9,376.5 231.6,376.7 233.2,376.4 234.8,376.6 236.5,375.9 238.1,376.6 239.8,375.9 241.4,376.2 243.0,376.2 244.7,376.2 246.3,376.0 248.1,375.7 249.8,375.7 251.6,375.7 253.3,375.4 255.1,375.3 256.8,375.4 258.6,375.1 260.3,375.0 262.1,374.6 263.8,374.9 266.0,372.8 268.2,370.5 269.9,370.3 271.5,369.8 273.1,370.1 274.8,369.9 276.4,369.4 278.1,369.2 279.6,369.1 281.1,369.5 282.7,369.3 284.2,369.4 285.7,369.9 287.4,375.8 289.0,381.9 291.6,396.6 293.4,395.9 295.2,396.0 297.0,395.8 298.8,395.5 300.5,394.8 302.1,395.2 303.8,394.4 305.4,394.6 307.2,394.5 308.9,394.1 310.7,393.6 312.4,392.8 314.2,392.8 315.8,392.7 317.4,392.5 319.1,392.8 320.7,392.0 322.4,392.5 324.0,392.5 325.6,392.1 327.3,391.8 329.0,391.8 330.8,391.0 332.5,391.5 334.3,390.9 336.0,390.7 337.7,390.5 339.3,389.9 341.0,388.7 342.6,388.5 344.4,388.0 346.1,386.9 346.1,408.8 62.7,408.8" fill="#ff9b5c"/>
<text x="372.6" y="285.9" font-size="9.2" fill="#f0f0f0" textLength="34.6" lengthAdjust="spacingAndGlyphs" stroke="#f0f0f0" stroke-width="0.22">Disk Ops</text>
<text x="372.6" y="295.8" font-size="8.6" fill="#c4c4c4" textLength="28.6" lengthAdjust="spacingAndGlyphs">ops/sec</text>
<line x1="416.80" y1="306.40" x2="416.80" y2="410.20" stroke="#3b3b3b" stroke-width="0.9"/>
<line x1="457.20" y1="306.40" x2="457.20" y2="410.20" stroke="#3b3b3b" stroke-width="0.9"/>
<line x1="497.60" y1="306.40" x2="497.60" y2="410.20" stroke="#3b3b3b" stroke-width="0.9"/>
<line x1="538.00" y1="306.40" x2="538.00" y2="410.20" stroke="#3b3b3b" stroke-width="0.9"/>
<line x1="578.40" y1="306.40" x2="578.40" y2="410.20" stroke="#3b3b3b" stroke-width="0.9"/>
<line x1="618.80" y1="306.40" x2="618.80" y2="410.20" stroke="#3b3b3b" stroke-width="0.9"/>
<line x1="659.20" y1="306.40" x2="659.20" y2="410.20" stroke="#3b3b3b" stroke-width="0.9"/>
<line x1="395.50" y1="310.10" x2="679.20" y2="310.10" stroke="#404040" stroke-width="0.9"/>
<line x1="395.50" y1="343.00" x2="679.20" y2="343.00" stroke="#404040" stroke-width="0.9"/>
<line x1="395.50" y1="375.90" x2="679.20" y2="375.90" stroke="#404040" stroke-width="0.9"/>
<line x1="395.50" y1="408.80" x2="679.20" y2="408.80" stroke="#4b4b4b" stroke-width="0.9"/>
<text x="377.6" y="311.8" font-size="7.5" fill="#bdbdbd" textLength="10.4" lengthAdjust="spacingAndGlyphs">750</text>
<text x="377.6" y="344.7" font-size="7.5" fill="#bdbdbd" textLength="10.4" lengthAdjust="spacingAndGlyphs">500</text>
<text x="377.6" y="377.6" font-size="7.5" fill="#bdbdbd" textLength="10.4" lengthAdjust="spacingAndGlyphs">250</text>
<text x="383.9" y="410.5" font-size="7.5" fill="#bdbdbd" textLength="4.1" lengthAdjust="spacingAndGlyphs">0</text>
<text x="404.5" y="420.6" font-size="7.6" fill="#bdbdbd" textLength="24.0" lengthAdjust="spacingAndGlyphs">16. May</text>
<text x="444.9" y="420.6" font-size="7.6" fill="#bdbdbd" textLength="24.0" lengthAdjust="spacingAndGlyphs">17. May</text>
<text x="485.3" y="420.6" font-size="7.6" fill="#bdbdbd" textLength="24.0" lengthAdjust="spacingAndGlyphs">18. May</text>
<text x="525.7" y="420.6" font-size="7.6" fill="#bdbdbd" textLength="24.0" lengthAdjust="spacingAndGlyphs">19. May</text>
<text x="566.1" y="420.6" font-size="7.6" fill="#bdbdbd" textLength="24.0" lengthAdjust="spacingAndGlyphs">20. May</text>
<text x="606.5" y="420.6" font-size="7.6" fill="#bdbdbd" textLength="24.0" lengthAdjust="spacingAndGlyphs">21. May</text>
<text x="646.9" y="420.6" font-size="7.6" fill="#bdbdbd" textLength="24.0" lengthAdjust="spacingAndGlyphs">22. May</text>
<polyline points="396.7,407.1 398.2,406.9 399.7,406.1 401.3,406.0 403.9,402.7 406.1,402.7 408.9,406.4 410.5,406.5 412.0,406.8 413.5,406.6 415.1,407.1 416.6,407.1 418.1,406.9 419.7,407.2 421.2,406.8 422.8,407.0 424.3,407.2 425.8,406.8 427.4,406.8 428.9,406.9 430.4,406.8 432.0,406.7 433.5,406.7 435.1,406.7 436.6,407.1 438.1,406.9 439.7,407.0 441.2,406.6 442.8,406.9 444.3,406.6 445.8,406.8 447.4,406.8 448.9,406.7 450.5,406.9 452.0,406.7 453.5,406.7 455.1,406.9 456.6,406.4 458.2,406.6 459.9,403.8 461.7,406.6 463.2,406.9 464.7,406.7 466.3,406.6 467.8,406.9 469.3,406.6 470.9,407.0 472.4,406.8 473.9,406.7 475.5,407.0 477.0,406.8 478.5,406.7 480.0,407.0 481.6,406.7 483.1,407.1 484.6,406.8 486.2,407.0 487.7,407.2 489.2,407.0 490.8,407.1 492.3,407.0 493.8,406.8 495.4,406.9 496.9,406.9 498.4,407.2 500.0,407.1 501.5,407.2 503.0,407.4 504.6,407.0 506.1,407.1 507.6,407.3 509.2,407.0 510.7,407.0 512.2,407.2 513.7,407.1 515.3,407.3 516.8,407.2 518.3,407.4 519.9,407.5 521.4,407.3 522.9,407.5 524.5,407.5 526.0,407.5 527.5,407.3 529.0,407.7 530.5,407.4 532.0,407.3 533.5,407.3 535.0,407.6 536.5,407.7 538.0,407.6 539.5,407.4 541.0,407.4 542.5,407.2 544.0,407.6 545.5,407.5 547.0,407.4 548.5,407.5 550.0,407.4 551.5,407.7 553.0,407.6 554.5,407.3 556.0,407.7 557.5,407.2 559.0,407.5 560.5,407.4 562.0,407.3 563.5,407.2 565.0,407.6 566.5,407.2 568.0,407.5 569.5,407.7 571.0,407.3 572.5,407.3 574.0,407.5 575.5,407.4 577.0,407.5 578.5,407.6 580.0,407.3 581.5,407.3 583.0,407.3 584.5,407.2 586.0,407.6 587.5,407.6 589.0,407.5 590.5,407.2 592.0,407.6 593.5,407.5 595.1,407.4 596.6,407.5 598.1,407.4 599.6,407.3 601.1,407.2 602.6,407.3 604.1,407.2 605.6,407.3 607.1,407.5 608.6,407.5 610.1,407.6 611.6,407.5 613.1,407.3 614.6,407.4 616.1,407.3 617.6,407.5 619.1,407.4 620.6,407.3 622.1,407.4 623.6,407.6 625.1,407.2 626.6,407.5 628.1,407.1 629.6,407.2 631.1,407.2 632.6,407.5 634.1,407.6 635.6,407.5 637.1,407.3 638.6,407.5 640.1,407.3 641.6,407.2 643.1,407.5 644.6,407.4 646.1,407.4 647.6,407.4 649.1,407.6 650.6,407.3 652.1,407.5 653.6,407.4 655.1,407.5 656.6,407.3 658.1,407.4 659.6,407.3 661.1,407.2 662.6,407.2 664.1,407.4 665.6,407.1 667.1,407.5 668.6,407.1 670.1,407.1 671.6,407.1 673.1,407.5 674.6,407.2 676.1,407.3" fill="none" stroke="#62a56b" stroke-width="0.85" stroke-linejoin="round" opacity="1"/>
<polyline points="396.6,408.2 398.8,360.0 400.6,377.5 402.8,353.0 404.3,354.6 406.5,358.3 408.0,408.2 409.7,407.9 411.3,407.9 413.0,407.9 414.7,408.3 416.3,408.2 417.9,403.8 419.6,408.2 421.1,408.2 422.6,408.3 424.1,408.3 425.6,407.9 427.1,408.2 428.6,408.1 430.1,408.4 431.6,408.2 433.4,403.8 434.9,406.0 436.5,401.6 438.2,408.2 439.9,408.4 441.5,408.2 443.0,392.8 444.9,381.8 446.8,370.0 448.7,358.9 450.2,393.9 451.8,381.9 453.5,385.2 455.7,371.7 457.9,357.8 460.1,322.8 461.8,389.6 463.4,392.4 464.9,388.5 466.7,362.2 468.4,359.6 470.0,350.2 471.7,340.3 473.7,311.9 475.3,328.0 476.9,343.6 478.3,340.8 480.2,344.7 482.4,371.0 484.1,370.7 485.7,370.8 487.4,370.7 489.0,370.7 490.7,371.2 492.3,371.2 494.0,371.0 495.6,371.2 497.3,371.0 499.0,366.6 500.6,371.0 502.1,371.0 503.6,370.8 505.1,370.7 506.6,370.7 508.1,371.1 509.6,370.8 511.1,370.9 512.6,371.0 514.2,353.6 515.9,336.4 517.6,371.0 519.2,369.9 520.9,369.4 522.5,368.8 523.5,370.5 525.1,370.3 526.7,370.5 528.2,370.3 529.8,370.2 531.3,370.5 532.9,370.2 534.5,370.4 536.0,370.1 534.8,370.5 536.4,367.9 538.0,365.1 539.7,367.7 541.3,371.0 543.0,370.8 544.6,370.7 546.2,370.8 547.9,370.4 549.5,370.5 551.2,370.3 552.8,370.0 554.4,370.1 556.1,370.4 557.7,370.0 559.4,370.5 561.0,370.2 562.7,370.2 564.3,370.5 566.1,371.1 567.9,372.1 569.8,372.7 572.0,369.2 573.6,370.4 575.2,371.0 576.9,369.4 578.5,368.3 580.3,368.9 582.2,369.5 584.0,370.1 586.0,369.7 587.9,368.7 589.9,368.3 591.6,370.1 593.3,370.3 594.9,370.4 596.6,370.9 598.2,371.0 599.8,370.8 601.4,371.2 603.0,370.7 604.6,370.7 606.2,370.9 607.8,370.8 609.4,370.5 611.0,370.8 612.6,370.4 614.2,370.8 615.8,370.7 617.4,370.7 619.0,370.5 620.6,371.0 622.3,371.4 623.8,371.3 625.3,371.3 626.8,371.3 628.4,371.6 629.9,371.1 631.4,371.5 632.9,371.0 634.5,371.1 636.0,371.1 637.5,371.5 639.0,371.2 640.5,371.1 642.1,371.4 643.6,371.0 645.1,371.1 646.6,371.1 648.2,371.2 649.7,371.2 651.2,371.1 652.7,370.9 654.2,370.9 655.8,370.8 657.3,371.0 658.9,370.5 660.6,369.6 662.2,370.4 663.9,371.0 665.4,371.1 666.9,370.8 668.5,371.0 670.0,371.2 671.5,371.1 673.0,370.9 674.6,371.1 676.1,371.2" fill="none" stroke="#1484a4" stroke-width="0.9" stroke-linejoin="round" opacity="1"/>
<text x="703.2" y="285.9" font-size="9.2" fill="#f0f0f0" textLength="57.4" lengthAdjust="spacingAndGlyphs" stroke="#f0f0f0" stroke-width="0.22">Memory Detail</text>
<text x="703.2" y="295.8" font-size="8.6" fill="#c4c4c4" textLength="12.3" lengthAdjust="spacingAndGlyphs">mb</text>
<line x1="747.00" y1="306.40" x2="747.00" y2="410.20" stroke="#3b3b3b" stroke-width="0.9"/>
<line x1="787.50" y1="306.40" x2="787.50" y2="410.20" stroke="#3b3b3b" stroke-width="0.9"/>
<line x1="828.00" y1="306.40" x2="828.00" y2="410.20" stroke="#3b3b3b" stroke-width="0.9"/>
<line x1="868.50" y1="306.40" x2="868.50" y2="410.20" stroke="#3b3b3b" stroke-width="0.9"/>
<line x1="909.00" y1="306.40" x2="909.00" y2="410.20" stroke="#3b3b3b" stroke-width="0.9"/>
<line x1="949.50" y1="306.40" x2="949.50" y2="410.20" stroke="#3b3b3b" stroke-width="0.9"/>
<line x1="990.00" y1="306.40" x2="990.00" y2="410.20" stroke="#3b3b3b" stroke-width="0.9"/>
<line x1="722.00" y1="339.90" x2="1010.00" y2="339.90" stroke="#404040" stroke-width="0.9"/>
<line x1="722.00" y1="374.40" x2="1010.00" y2="374.40" stroke="#404040" stroke-width="0.9"/>
<line x1="722.00" y1="408.80" x2="1010.00" y2="408.80" stroke="#4b4b4b" stroke-width="0.9"/>
<text x="711.9" y="341.6" font-size="7.5" fill="#bdbdbd" textLength="7.3" lengthAdjust="spacingAndGlyphs">5k</text>
<text x="705.9" y="376.1" font-size="7.5" fill="#bdbdbd" textLength="13.3" lengthAdjust="spacingAndGlyphs">2.5k</text>
<text x="715.1" y="410.5" font-size="7.5" fill="#bdbdbd" textLength="4.1" lengthAdjust="spacingAndGlyphs">0</text>
<text x="734.7" y="420.6" font-size="7.6" fill="#bdbdbd" textLength="24.0" lengthAdjust="spacingAndGlyphs">16. May</text>
<text x="775.2" y="420.6" font-size="7.6" fill="#bdbdbd" textLength="24.0" lengthAdjust="spacingAndGlyphs">17. May</text>
<text x="815.7" y="420.6" font-size="7.6" fill="#bdbdbd" textLength="24.0" lengthAdjust="spacingAndGlyphs">18. May</text>
<text x="856.2" y="420.6" font-size="7.6" fill="#bdbdbd" textLength="24.0" lengthAdjust="spacingAndGlyphs">19. May</text>
<text x="896.7" y="420.6" font-size="7.6" fill="#bdbdbd" textLength="24.0" lengthAdjust="spacingAndGlyphs">20. May</text>
<text x="937.2" y="420.6" font-size="7.6" fill="#bdbdbd" textLength="24.0" lengthAdjust="spacingAndGlyphs">21. May</text>
<text x="977.7" y="420.6" font-size="7.6" fill="#bdbdbd" textLength="24.0" lengthAdjust="spacingAndGlyphs">22. May</text>
<polygon points="727.7,343.6 729.3,342.2 731.0,340.2 732.6,338.5 734.3,337.0 735.9,333.5 737.6,330.3 739.2,326.9 740.9,323.3 742.4,323.1 743.9,323.1 745.4,323.1 746.9,323.2 748.4,323.3 749.9,323.1 751.5,323.2 753.0,323.1 754.5,323.5 756.0,323.4 757.5,323.1 759.0,323.5 760.6,323.3 762.4,327.8 764.3,332.7 765.8,330.7 767.3,329.1 768.9,327.1 770.4,325.0 772.0,325.1 773.7,325.0 775.3,324.9 777.0,325.1 778.6,324.8 780.2,325.0 781.8,324.9 783.4,325.0 784.9,324.8 786.5,325.0 788.1,325.2 789.6,325.1 791.2,325.0 793.0,322.8 794.8,320.7 796.6,318.4 798.4,316.3 799.9,316.1 801.5,316.3 803.0,316.2 804.5,316.4 806.1,316.5 807.6,316.3 809.8,316.8 812.0,317.4 813.5,317.4 815.1,317.5 816.6,317.4 818.2,317.4 819.7,317.6 821.3,317.8 822.8,317.7 824.4,317.7 825.9,317.9 827.5,317.8 829.0,317.8 830.6,317.8 832.1,317.7 833.7,317.9 835.2,317.7 836.8,317.9 838.3,318.1 839.9,318.1 841.4,318.1 843.0,318.0 844.5,318.1 846.1,318.1 847.6,318.3 849.2,318.2 850.8,318.3 852.4,318.5 854.0,318.4 855.6,318.7 857.1,318.4 858.7,318.6 860.2,318.7 861.8,318.6 863.3,318.7 864.9,318.9 866.4,318.5 868.0,318.8 869.6,318.6 871.1,319.0 872.7,319.1 874.2,318.9 875.8,318.8 877.3,319.0 878.9,319.1 880.5,319.2 882.0,319.1 883.6,320.6 885.2,322.1 886.8,323.5 888.3,323.6 889.9,323.5 891.4,323.4 892.9,323.7 894.4,323.3 895.9,323.5 897.4,323.4 898.9,323.5 900.5,323.2 902.0,323.6 903.5,323.3 905.0,323.2 906.5,323.3 908.0,323.3 909.5,323.1 911.1,323.3 912.6,323.3 914.1,323.4 915.6,323.2 917.1,323.2 918.6,323.2 920.2,323.4 921.7,323.5 923.2,323.3 924.7,323.1 926.2,323.3 928.0,320.5 929.7,317.3 931.5,314.3 933.2,311.4 934.8,311.3 936.3,311.6 937.9,311.6 939.4,311.5 941.0,311.4 942.5,311.5 944.1,311.3 945.6,311.7 947.2,311.4 948.7,311.5 950.3,311.4 952.5,311.6 954.7,311.4 956.2,311.6 957.7,311.4 959.3,311.3 960.8,311.5 962.3,311.3 963.8,311.6 965.4,311.4 966.9,311.6 968.4,311.3 970.0,311.4 971.5,311.4 973.1,311.3 974.6,311.4 976.2,311.3 977.7,311.2 979.3,311.6 980.8,311.3 982.4,311.3 983.9,311.3 985.5,311.4 987.0,311.4 988.6,311.5 990.1,311.5 991.7,311.4 993.2,311.7 994.8,311.6 996.3,311.2 997.9,311.6 999.4,311.6 1001.0,311.6 1002.5,311.3 1004.1,311.6 1005.6,311.5 1007.2,311.4 1007.2,408.8 727.7,408.8" fill="#0090b1"/>
<polygon points="727.7,370.5 729.3,369.0 731.0,367.8 732.6,367.0 734.3,365.5 735.9,362.3 737.6,358.8 739.2,355.4 740.9,352.4 742.4,352.2 743.9,352.2 745.4,352.5 746.9,352.3 748.4,352.2 749.9,352.6 751.5,352.5 753.0,352.2 754.5,352.6 756.0,352.4 757.5,352.5 759.0,352.4 760.6,352.4 762.4,356.4 764.3,360.0 765.8,359.1 767.3,358.0 768.9,356.6 770.4,355.6 772.0,356.1 773.7,356.4 775.3,356.9 777.0,357.1 778.6,357.7 780.2,357.8 781.8,357.8 783.4,357.6 784.9,357.5 786.5,357.4 788.1,357.5 789.6,357.2 791.2,357.4 793.0,355.3 794.8,353.1 796.6,351.2 798.4,349.1 799.9,349.2 801.5,349.2 803.0,349.5 804.5,349.1 806.1,349.6 807.6,349.5 809.8,350.2 812.0,350.8 813.5,351.0 815.1,351.1 816.6,351.3 818.2,351.2 819.7,351.3 821.3,351.7 822.8,351.4 824.4,351.8 825.9,351.9 827.5,351.7 829.0,352.1 830.6,352.2 832.1,352.5 833.7,352.3 835.2,352.7 836.8,352.6 838.3,352.7 839.9,353.0 841.4,352.7 843.0,353.1 844.5,353.2 846.1,353.2 847.6,353.5 849.2,353.5 850.8,353.5 852.4,353.7 854.0,353.9 855.6,353.9 857.1,354.1 858.7,353.9 860.2,354.0 861.8,354.0 863.3,354.1 864.9,354.3 866.4,354.1 868.0,354.4 869.6,354.2 871.1,354.3 872.7,354.2 874.2,354.4 875.8,354.6 877.3,354.5 878.9,354.6 880.5,354.4 882.0,354.6 883.6,356.1 885.2,357.8 886.8,359.6 888.3,359.6 889.9,359.6 891.4,359.7 892.9,359.3 894.4,359.6 895.9,359.7 897.4,359.5 898.9,359.2 900.5,359.3 902.0,359.2 903.5,359.2 905.0,359.6 906.5,359.4 908.0,359.4 909.5,359.5 911.1,359.5 912.6,359.4 914.1,359.3 915.6,359.3 917.1,359.3 918.6,359.3 920.2,359.3 921.7,359.1 923.2,359.3 924.7,359.1 926.2,359.1 928.0,356.9 929.7,354.1 931.5,351.8 933.2,349.5 934.8,349.3 936.3,349.7 937.9,349.7 939.4,349.6 941.0,349.5 942.5,349.7 944.1,349.7 945.6,349.5 947.2,349.4 948.7,349.4 950.3,349.5 952.5,348.7 954.7,348.0 956.2,347.9 957.7,347.9 959.3,348.0 960.8,348.1 962.3,347.7 963.8,347.9 965.4,347.6 966.9,347.6 968.4,347.9 970.0,347.8 971.5,347.8 973.1,348.1 974.6,347.9 976.2,347.7 977.7,347.9 979.3,348.0 980.8,348.2 982.4,348.3 983.9,348.1 985.5,348.1 987.0,348.0 988.6,348.3 990.1,348.1 991.7,348.1 993.2,348.1 994.8,348.1 996.3,348.5 997.9,348.2 999.4,348.7 1001.0,348.3 1002.5,348.7 1004.1,348.4 1005.6,348.4 1007.2,348.6 1007.2,408.8 727.7,408.8" fill="#6db273"/>
<polygon points="727.7,371.4 729.3,370.3 731.0,368.9 732.6,367.9 734.3,366.6 735.9,363.7 737.6,360.9 739.2,358.5 740.9,355.6 742.4,355.8 743.9,355.8 745.4,355.8 746.9,355.4 748.4,355.7 749.9,355.8 751.5,355.6 753.0,355.9 754.5,355.5 756.0,355.9 757.5,355.8 759.0,355.4 760.6,355.6 762.4,358.7 764.3,362.2 765.8,361.3 767.3,360.4 768.9,359.0 770.4,358.3 772.0,358.5 773.7,359.1 775.3,359.2 777.0,359.9 778.6,360.1 780.2,360.5 781.8,360.2 783.4,360.4 784.9,360.5 786.5,360.4 788.1,360.5 789.6,360.3 791.2,360.5 793.0,358.7 794.8,356.7 796.6,355.0 798.4,353.0 799.9,353.2 801.5,353.1 803.0,353.2 804.5,353.5 806.1,353.6 807.6,353.5 809.8,354.1 812.0,354.6 813.5,354.7 815.1,354.7 816.6,354.7 818.2,355.2 819.7,355.2 821.3,355.4 822.8,355.2 824.4,355.5 825.9,355.8 827.5,355.8 829.0,355.8 830.6,355.8 832.1,355.9 833.7,356.3 835.2,356.1 836.8,356.4 838.3,356.5 839.9,356.7 841.4,356.8 843.0,356.6 844.5,356.6 846.1,356.8 847.6,357.0 849.2,357.2 850.8,357.4 852.4,357.8 854.0,357.8 855.6,358.1 857.1,357.7 858.7,358.1 860.2,358.1 861.8,358.2 863.3,358.1 864.9,358.0 866.4,358.3 868.0,358.3 869.6,358.3 871.1,358.4 872.7,358.2 874.2,358.1 875.8,358.4 877.3,358.5 878.9,358.3 880.5,358.6 882.0,358.5 883.6,360.3 885.2,361.6 886.8,363.3 888.3,363.3 889.9,363.4 891.4,363.2 892.9,363.1 894.4,363.1 895.9,363.3 897.4,363.3 898.9,363.1 900.5,362.9 902.0,363.3 903.5,363.3 905.0,363.0 906.5,363.1 908.0,363.3 909.5,363.2 911.1,363.0 912.6,363.0 914.1,363.0 915.6,362.8 917.1,362.8 918.6,362.8 920.2,363.0 921.7,362.8 923.2,362.9 924.7,362.8 926.2,362.9 928.0,360.8 929.7,358.5 931.5,356.4 933.2,354.6 934.8,354.8 936.3,354.4 937.9,354.2 939.4,354.5 941.0,354.5 942.5,354.1 944.1,354.3 945.6,354.2 947.2,354.2 948.7,353.9 950.3,354.1 952.5,353.3 954.7,353.0 956.2,353.2 957.7,353.1 959.3,352.9 960.8,352.9 962.3,352.7 963.8,352.9 965.4,352.7 966.9,352.9 968.4,352.8 970.0,352.6 971.5,352.8 973.1,352.9 974.6,352.6 976.2,352.6 977.7,352.7 979.3,352.8 980.8,352.8 982.4,352.8 983.9,353.1 985.5,353.3 987.0,353.2 988.6,353.5 990.1,353.5 991.7,353.1 993.2,353.5 994.8,353.4 996.3,353.3 997.9,353.8 999.4,353.5 1001.0,353.7 1002.5,353.8 1004.1,354.0 1005.6,353.9 1007.2,353.9 1007.2,408.8 727.7,408.8" fill="#dc4a57"/>
<polygon points="727.7,389.6 729.3,388.4 731.0,387.3 732.6,386.1 734.3,385.2 735.9,384.9 737.6,384.3 739.2,383.4 740.9,383.0 742.4,382.8 743.9,382.9 745.4,382.9 746.9,383.2 748.4,383.2 749.9,383.2 751.5,382.8 753.0,383.1 754.5,383.1 756.0,383.1 757.5,383.2 759.0,382.8 760.6,383.0 762.4,384.5 764.3,386.3 765.8,386.0 767.3,385.6 768.9,385.1 770.4,384.5 772.0,384.6 773.7,385.0 775.3,385.3 777.0,385.2 778.6,385.5 780.2,385.8 781.8,385.7 783.4,385.7 784.9,385.8 786.5,385.7 788.1,385.7 789.6,385.7 791.2,385.8 793.0,384.9 794.8,383.6 796.6,383.0 798.4,381.9 799.9,381.9 801.5,382.0 803.0,382.7 804.5,382.5 806.1,383.0 807.6,383.0 809.8,383.2 812.0,383.0 813.5,383.3 815.1,383.0 816.6,383.2 818.2,383.1 819.7,383.6 821.3,383.6 822.8,383.6 824.4,383.6 825.9,383.6 827.5,383.9 829.0,383.8 830.6,383.9 832.1,383.8 833.7,383.9 835.2,383.9 836.8,384.3 838.3,384.3 839.9,384.1 841.4,384.6 843.0,384.3 844.5,384.5 846.1,384.4 847.6,384.6 849.2,384.7 850.8,385.3 852.4,385.4 854.0,385.8 855.6,385.7 857.1,385.9 858.7,385.8 860.2,386.1 861.8,385.8 863.3,386.2 864.9,385.8 866.4,386.2 868.0,386.1 869.6,385.9 871.1,386.1 872.7,386.0 874.2,386.0 875.8,386.0 877.3,386.1 878.9,386.5 880.5,386.5 882.0,386.3 883.6,387.0 885.2,387.1 886.8,387.8 888.3,387.7 889.9,388.0 891.4,387.6 892.9,387.9 894.4,387.7 895.9,388.1 897.4,387.6 898.9,388.0 900.5,387.7 902.0,387.6 903.5,387.6 905.0,388.0 906.5,387.8 908.0,387.7 909.5,387.8 911.1,388.0 912.6,387.7 914.1,387.8 915.6,387.6 917.1,387.7 918.6,387.9 920.2,387.9 921.7,387.7 923.2,387.6 924.7,387.6 926.2,387.8 928.0,386.8 929.7,385.7 931.5,384.6 933.2,383.7 934.8,383.5 936.3,383.7 937.9,383.8 939.4,383.8 941.0,383.7 942.5,383.5 944.1,383.4 945.6,383.8 947.2,383.6 948.7,383.8 950.3,383.7 952.5,382.8 954.7,382.3 956.2,382.6 957.7,382.4 959.3,382.7 960.8,382.8 962.3,382.7 963.8,382.5 965.4,383.0 966.9,382.9 968.4,383.1 970.0,383.0 971.5,382.9 973.1,383.0 974.6,383.4 976.2,383.2 977.7,383.1 979.3,383.3 980.8,383.5 982.4,383.3 983.9,383.6 985.5,383.6 987.0,383.7 988.6,383.6 990.1,383.9 991.7,384.0 993.2,384.1 994.8,383.9 996.3,384.2 997.9,384.1 999.4,384.3 1001.0,384.1 1002.5,384.5 1004.1,384.6 1005.6,384.5 1007.2,384.5 1007.2,408.8 727.7,408.8" fill="#a76bb0"/>
<polygon points="727.7,400.5 729.3,400.2 731.0,400.0 732.6,399.7 734.3,399.4 735.9,397.5 737.6,396.4 739.2,394.3 740.9,392.8 742.4,392.7 743.9,392.6 745.4,392.7 746.9,393.0 748.4,392.6 749.9,392.6 751.5,392.9 753.0,392.7 754.5,392.6 756.0,392.9 757.5,392.9 759.0,392.9 760.6,392.8 762.4,394.3 764.3,395.5 765.8,395.1 767.3,395.2 768.9,394.9 770.4,394.6 772.0,394.4 773.7,394.6 775.3,394.8 777.0,394.9 778.6,394.8 780.2,395.0 781.8,394.8 783.4,395.0 784.9,394.9 786.5,395.1 788.1,395.2 789.6,394.9 791.2,395.0 793.0,394.2 794.8,393.5 796.6,392.4 798.4,391.8 799.9,392.0 801.5,392.2 803.0,392.0 804.5,392.1 806.1,392.5 807.6,392.4 809.8,393.2 812.0,393.9 813.5,393.9 815.1,394.3 816.6,394.2 818.2,394.0 819.7,394.0 821.3,394.1 822.8,394.2 824.4,394.5 825.9,394.5 827.5,394.6 829.0,394.6 830.6,394.7 832.1,394.3 833.7,394.6 835.2,394.9 836.8,394.9 838.3,394.6 839.9,394.7 841.4,394.9 843.0,394.8 844.5,394.9 846.1,394.7 847.6,395.0 849.2,395.0 850.8,394.9 852.4,394.5 854.0,394.6 855.6,394.5 857.1,394.9 858.7,394.9 860.2,395.0 861.8,394.9 863.3,395.0 864.9,395.1 866.4,395.2 868.0,394.8 869.6,395.2 871.1,395.0 872.7,395.3 874.2,395.1 875.8,395.3 877.3,395.5 878.9,395.4 880.5,395.3 882.0,395.5 883.6,397.0 885.2,398.5 886.8,400.1 888.3,400.3 889.9,400.0 891.4,400.0 892.9,400.1 894.4,399.9 895.9,400.1 897.4,400.3 898.9,400.1 900.5,399.9 902.0,400.0 903.5,400.1 905.0,399.9 906.5,399.9 908.0,399.9 909.5,400.0 911.1,400.0 912.6,400.0 914.1,399.9 915.6,399.9 917.1,400.1 918.6,400.2 920.2,400.1 921.7,400.1 923.2,400.1 924.7,399.9 926.2,400.1 928.0,399.6 929.7,398.8 931.5,398.3 933.2,397.7 934.8,397.7 936.3,397.6 937.9,397.6 939.4,397.5 941.0,397.5 942.5,397.7 944.1,397.6 945.6,397.7 947.2,397.4 948.7,397.6 950.3,397.7 952.5,397.8 954.7,397.7 956.2,397.5 957.7,397.7 959.3,397.7 960.8,397.6 962.3,397.9 963.8,397.6 965.4,397.8 966.9,397.5 968.4,397.4 970.0,397.7 971.5,397.8 973.1,397.6 974.6,397.4 976.2,397.6 977.7,397.6 979.3,397.8 980.8,397.5 982.4,397.5 983.9,397.9 985.5,397.8 987.0,397.5 988.6,397.6 990.1,397.6 991.7,397.7 993.2,397.7 994.8,397.8 996.3,397.8 997.9,397.7 999.4,397.8 1001.0,397.8 1002.5,397.8 1004.1,397.6 1005.6,397.8 1007.2,397.7 1007.2,408.8 727.7,408.8" fill="#ff9b5c"/>
<text x="42.6" y="457.7" font-size="9.2" fill="#f0f0f0" textLength="59.8" lengthAdjust="spacingAndGlyphs" stroke="#f0f0f0" stroke-width="0.22">Network Traffic</text>
<text x="42.6" y="468.0" font-size="8.6" fill="#c4c4c4" textLength="17.6" lengthAdjust="spacingAndGlyphs">kbps</text>
<line x1="88.80" y1="478.60" x2="88.80" y2="552.00" stroke="#3b3b3b" stroke-width="0.9"/>
<line x1="129.40" y1="478.60" x2="129.40" y2="552.00" stroke="#3b3b3b" stroke-width="0.9"/>
<line x1="170.00" y1="478.60" x2="170.00" y2="552.00" stroke="#3b3b3b" stroke-width="0.9"/>
<line x1="210.60" y1="478.60" x2="210.60" y2="552.00" stroke="#3b3b3b" stroke-width="0.9"/>
<line x1="251.20" y1="478.60" x2="251.20" y2="552.00" stroke="#3b3b3b" stroke-width="0.9"/>
<line x1="291.80" y1="478.60" x2="291.80" y2="552.00" stroke="#3b3b3b" stroke-width="0.9"/>
<line x1="332.40" y1="478.60" x2="332.40" y2="552.00" stroke="#3b3b3b" stroke-width="0.9"/>
<line x1="69.10" y1="494.80" x2="349.20" y2="494.80" stroke="#404040" stroke-width="0.9"/>
<line x1="69.10" y1="538.30" x2="349.20" y2="538.30" stroke="#404040" stroke-width="0.9"/>
<text x="52.0" y="496.4" font-size="7.5" fill="#bdbdbd" textLength="9.0" lengthAdjust="spacingAndGlyphs">5M</text>
<text x="46.1" y="539.9" font-size="7.5" fill="#bdbdbd" textLength="14.9" lengthAdjust="spacingAndGlyphs">2.5M</text>
<polygon points="78.3,552.0 79.0,483.2 79.5,483.2 80.3,552.0" fill="#5e9a66"/>
<polygon points="78.6,552.0 79.2,532.8 79.8,532.8 80.4,552.0" fill="#1583a2"/>
<text x="372.6" y="457.7" font-size="9.2" fill="#f0f0f0" textLength="52.6" lengthAdjust="spacingAndGlyphs" stroke="#f0f0f0" stroke-width="0.22">Disk Capacity</text>
<text x="372.6" y="468.0" font-size="8.6" fill="#c4c4c4" textLength="52.8" lengthAdjust="spacingAndGlyphs">% free vs used</text>
<line x1="412.60" y1="478.60" x2="412.60" y2="552.00" stroke="#3b3b3b" stroke-width="0.9"/>
<line x1="453.70" y1="478.60" x2="453.70" y2="552.00" stroke="#3b3b3b" stroke-width="0.9"/>
<line x1="494.80" y1="478.60" x2="494.80" y2="552.00" stroke="#3b3b3b" stroke-width="0.9"/>
<line x1="535.90" y1="478.60" x2="535.90" y2="552.00" stroke="#3b3b3b" stroke-width="0.9"/>
<line x1="577.00" y1="478.60" x2="577.00" y2="552.00" stroke="#3b3b3b" stroke-width="0.9"/>
<line x1="618.10" y1="478.60" x2="618.10" y2="552.00" stroke="#3b3b3b" stroke-width="0.9"/>
<line x1="659.20" y1="478.60" x2="659.20" y2="552.00" stroke="#3b3b3b" stroke-width="0.9"/>
<line x1="393.40" y1="500.50" x2="679.50" y2="500.50" stroke="#404040" stroke-width="0.9"/>
<line x1="393.40" y1="541.00" x2="679.50" y2="541.00" stroke="#404040" stroke-width="0.9"/>
<text x="377.1" y="502.1" font-size="7.5" fill="#bdbdbd" textLength="7.1" lengthAdjust="spacingAndGlyphs">50</text>
<text x="377.1" y="542.7" font-size="7.5" fill="#bdbdbd" textLength="7.1" lengthAdjust="spacingAndGlyphs">25</text>
<polyline points="394.4,510.3 396.6,511.3 398.8,512.1 400.5,513.0 402.1,513.6 404.3,507.7 405.8,507.6 407.4,508.0 408.9,507.8 410.5,508.2 412.0,508.2 413.6,508.2 415.1,508.5 416.7,508.4 418.2,508.5 419.8,508.7 421.3,508.8 422.9,508.8 425.1,506.6 427.3,504.4 428.9,510.4 430.6,516.4 432.2,512.0 433.8,507.7 435.4,507.2 436.9,506.9 438.4,506.3 440.0,505.9 441.5,505.5 443.0,505.5 444.5,505.5 446.0,505.5 447.5,505.7 449.0,505.8 450.5,505.7 452.0,505.7 453.5,505.7 455.0,505.6 456.5,505.7 458.1,505.6 459.6,505.8 461.1,505.9 462.6,505.7 464.1,506.0 465.6,505.8 467.1,506.1 468.6,506.1 470.1,506.1 471.6,505.9 473.1,506.0 474.7,506.2 476.2,505.9 477.7,505.9 479.2,506.1 480.7,506.1 482.2,506.3 483.7,506.3 485.2,506.2 486.7,506.4 488.2,506.2 489.7,506.3 491.3,506.4 492.8,506.3 494.3,506.3 495.8,506.4 497.3,506.3 498.8,506.6 500.3,506.5 501.8,506.5 503.3,506.3 504.8,506.4 506.3,506.5 507.8,506.6 509.4,506.6 510.9,506.7 512.4,506.8 513.9,506.6 515.4,506.6 516.9,506.7 518.4,506.9 519.9,506.7 521.4,506.7 522.9,506.9 524.4,506.7 526.0,506.8 527.5,506.8 529.0,507.0 530.5,507.0 532.1,506.9 533.6,506.7 535.1,507.1 536.7,507.0 538.2,507.1 539.7,507.2 541.2,507.1 542.8,507.0 544.3,506.9 545.8,507.0 547.3,507.1 548.9,507.1 550.4,507.0 551.9,507.0 553.5,507.2 555.0,507.2 556.5,507.1 558.0,507.4 559.6,507.3 561.1,507.1 562.6,507.2 564.2,507.4 565.7,507.2 567.2,507.4 568.7,507.1 570.3,507.3 571.8,507.5 573.3,507.4 574.9,507.5 576.4,507.3 577.9,507.4 579.4,507.5 581.0,507.4 582.5,507.6 584.0,507.5 585.5,507.7 587.1,507.6 588.6,507.5 590.1,507.4 591.7,507.5 593.2,507.7 594.7,507.5 596.2,507.5 597.8,507.7 598.4,500.0 599.3,491.9 600.8,491.8 602.3,492.0 603.8,492.1 605.3,492.0 606.8,492.1 608.3,491.8 609.8,491.8 611.4,492.1 612.9,492.0 614.4,492.1 615.9,492.0 617.4,491.9 618.9,492.0 620.4,491.9 621.9,492.3 623.4,492.2 624.9,492.1 626.4,492.1 627.9,492.1 629.4,492.0 630.9,492.4 632.4,492.2 633.9,492.4 635.4,492.2 637.0,492.3 638.5,492.2 640.0,492.1 641.5,492.5 643.0,492.4 644.5,492.2 646.0,492.5 647.5,492.5 649.0,492.3 650.5,492.4 652.0,492.6 653.5,492.4 655.0,492.6 656.5,492.3 658.0,492.4 659.5,492.5 661.0,492.3 662.6,492.4 664.1,492.6 665.6,492.5 667.1,492.6 668.6,492.4 670.1,492.4 671.6,492.5 673.1,492.4 674.6,492.8 676.1,492.6" fill="none" stroke="#1484a4" stroke-width="1.0" stroke-linejoin="round" opacity="1"/>
<polyline points="394.4,489.5 396.6,489.0 398.8,488.6 400.5,487.5 402.1,486.2 404.9,492.4 406.6,492.1 408.2,492.2 409.8,492.1 411.4,492.0 413.0,491.9 414.7,491.6 416.3,491.6 418.0,491.7 419.6,491.4 421.3,491.3 422.9,491.3 424.6,492.5 426.2,493.8 427.9,495.2 429.9,483.6 431.6,483.2 433.3,487.7 434.9,492.4 436.6,492.5 438.2,493.0 439.9,493.9 441.5,494.6 443.0,494.4 444.5,494.3 446.0,494.5 447.5,494.2 449.0,494.2 450.5,494.4 452.0,494.0 453.5,494.1 455.0,494.1 456.5,494.2 458.1,494.2 459.6,493.9 461.1,494.0 462.6,494.1 464.1,493.9 465.6,494.2 467.1,493.8 468.6,494.1 470.1,493.9 471.6,493.8 473.1,493.9 474.7,493.7 476.2,493.9 477.7,493.7 479.2,494.0 480.7,493.8 482.2,493.7 483.7,493.6 485.2,493.8 486.7,493.6 488.2,493.8 489.7,493.5 491.3,493.7 492.8,493.7 494.3,493.5 495.8,493.7 497.3,493.5 498.8,493.6 500.3,493.6 501.8,493.5 503.3,493.5 504.8,493.3 506.3,493.3 507.8,493.6 509.4,493.4 510.9,493.5 512.4,493.2 513.9,493.4 515.4,493.3 516.9,493.3 518.4,493.2 519.9,493.1 521.4,493.2 522.9,493.2 524.4,493.1 526.0,493.2 527.5,493.3 529.0,493.1 530.5,493.1 532.1,493.3 533.6,493.3 535.1,493.3 536.7,493.3 538.2,492.9 539.7,493.0 541.2,492.9 542.8,493.1 544.3,493.1 545.8,492.9 547.3,492.9 548.9,493.0 550.4,493.0 551.9,492.8 553.5,493.0 555.0,492.8 556.5,492.9 558.0,492.7 559.6,492.7 561.1,493.0 562.6,492.9 564.2,492.9 565.7,492.6 567.2,492.6 568.7,492.6 570.3,492.6 571.8,492.6 573.3,492.6 574.9,492.5 576.4,492.5 577.9,492.7 579.4,492.5 581.0,492.7 582.5,492.6 584.0,492.6 585.5,492.4 587.1,492.5 588.6,492.5 590.1,492.4 591.7,492.2 593.2,492.6 594.7,492.5 596.2,492.3 597.8,492.4 598.4,500.0 599.3,508.1 600.8,507.9 602.3,508.2 603.8,508.1 605.3,507.9 606.8,507.9 608.3,507.9 609.8,508.1 611.4,507.9 612.9,508.1 614.4,508.0 615.9,507.8 617.4,508.0 618.9,507.9 620.4,508.0 621.9,508.0 623.4,507.8 624.9,507.7 626.4,508.0 627.9,507.8 629.4,507.9 630.9,507.8 632.4,507.8 633.9,507.9 635.4,507.8 637.0,507.7 638.5,507.5 640.0,507.7 641.5,507.6 643.0,507.6 644.5,507.8 646.0,507.4 647.5,507.7 649.0,507.4 650.5,507.6 652.0,507.6 653.5,507.4 655.0,507.5 656.5,507.7 658.0,507.5 659.5,507.4 661.0,507.3 662.6,507.2 664.1,507.3 665.6,507.3 667.1,507.2 668.6,507.3 670.1,507.2 671.6,507.4 673.1,507.3 674.6,507.2 676.1,507.2" fill="none" stroke="#62a56b" stroke-width="1.0" stroke-linejoin="round" opacity="1"/>
<text x="703.2" y="457.7" font-size="9.2" fill="#f0f0f0" textLength="43.2" lengthAdjust="spacingAndGlyphs" stroke="#f0f0f0" stroke-width="0.22">Swap Used</text>
<text x="703.2" y="468.0" font-size="8.6" fill="#c4c4c4" textLength="52.2" lengthAdjust="spacingAndGlyphs">% free vs used</text>
<line x1="746.60" y1="478.60" x2="746.60" y2="484.00" stroke="#3b3b3b" stroke-width="0.9"/>
<line x1="787.10" y1="478.60" x2="787.10" y2="484.00" stroke="#3b3b3b" stroke-width="0.9"/>
<line x1="827.60" y1="478.60" x2="827.60" y2="484.00" stroke="#3b3b3b" stroke-width="0.9"/>
<line x1="868.10" y1="478.60" x2="868.10" y2="484.00" stroke="#3b3b3b" stroke-width="0.9"/>
<line x1="908.60" y1="478.60" x2="908.60" y2="484.00" stroke="#3b3b3b" stroke-width="0.9"/>
<line x1="949.10" y1="478.60" x2="949.10" y2="484.00" stroke="#3b3b3b" stroke-width="0.9"/>
<line x1="989.60" y1="478.60" x2="989.60" y2="484.00" stroke="#3b3b3b" stroke-width="0.9"/>
<text x="707.8" y="485.3" font-size="7.5" fill="#bdbdbd" textLength="10.4" lengthAdjust="spacingAndGlyphs">100</text>
<text x="711.1" y="534.5" font-size="7.5" fill="#bdbdbd" textLength="7.1" lengthAdjust="spacingAndGlyphs">50</text>
<rect x="726.00" y="483.20" width="281.20" height="70.00" fill="#6db273"/>
<rect x="0.00" y="551.50" width="1024.00" height="89.00" fill="#333333"/>
<rect x="0.00" y="611.90" width="1024.00" height="19.10" fill="#272727"/>
<clipPath id="fb"><rect x="0" y="611.9" width="1024" height="19.1"/></clipPath><g clip-path="url(#fb)">
<g fill="none" stroke="#4f4f4f" stroke-width="1.15"><path d="M36.1,611.9 L41.3,617.0 L28.2,631"/><path d="M37.3,631 L53.1,614.6999999999999"/><path d="M64.9,611.9 L59.5,617.0 L72.0,631"/><path d="M62.6,631 L54.2,621.8 M47.7,614.6999999999999 L49.5,616.8"/><path d="M46.3,631 L50.1,626.6 L53.8,631"/></g>
<g fill="none" stroke="#4f4f4f" stroke-width="1.15"><rect x="2.0" y="602" width="18" height="18.6" rx="1.2"/><rect x="14.8" y="604" width="8.8" height="14.6" rx="1" fill="#272727"/><rect x="16.8" y="612.6" width="4.6" height="3" fill="#3a3a3a" stroke="none"/><path d="M10.2,620.6 V626.6 M1.6,628 H8.2 M12.2,628 H18.2"/><path d="M8.4,628 L10.2,626.2 L12.0,628 L10.2,629.8 Z"/></g>
<line x1="22.60" y1="613.90" x2="34.60" y2="613.90" stroke="#444" stroke-width="1.0" stroke-dasharray="0.7 0.8"/>
<line x1="65.60" y1="613.90" x2="77.60" y2="613.90" stroke="#444" stroke-width="1.0" stroke-dasharray="0.7 0.8"/>
<g fill="none" stroke="#4f4f4f" stroke-width="1.15"><path d="M116.1,611.9 L121.3,617.0 L108.2,631"/><path d="M117.3,631 L133.1,614.6999999999999"/><path d="M144.9,611.9 L139.5,617.0 L152.0,631"/><path d="M142.6,631 L134.2,621.8 M127.7,614.6999999999999 L129.5,616.8"/><path d="M126.3,631 L130.1,626.6 L133.8,631"/></g>
<g fill="none" stroke="#4f4f4f" stroke-width="1.15"><rect x="80.1" y="606" width="14.6" height="24.2" rx="1.8"/><rect x="82.5" y="610.5" width="9.8" height="12.2" rx="0.8"/><path d="M84.8,614.4 H90.0 M84.8,616.9 H90.0 M84.8,619.4 H88.4"/><circle cx="87.4" cy="626.5" r="0.9"/></g>
<line x1="102.60" y1="613.90" x2="114.60" y2="613.90" stroke="#444" stroke-width="1.0" stroke-dasharray="0.7 0.8"/>
<line x1="145.60" y1="613.90" x2="157.60" y2="613.90" stroke="#444" stroke-width="1.0" stroke-dasharray="0.7 0.8"/>
<g fill="none" stroke="#4f4f4f" stroke-width="1.15"><path d="M196.1,611.9 L201.3,617.0 L188.2,631"/><path d="M197.3,631 L213.1,614.6999999999999"/><path d="M224.9,611.9 L219.5,617.0 L232.0,631"/><path d="M222.6,631 L214.2,621.8 M207.7,614.6999999999999 L209.5,616.8"/><path d="M206.3,631 L210.1,626.6 L213.8,631"/></g>
<g fill="none" stroke="#4f4f4f" stroke-width="1.15"><circle cx="159.3" cy="619.6" r="3.3"/><circle cx="181.3" cy="619.6" r="3.3"/><circle cx="170.3" cy="628" r="3.3"/><circle cx="159.3" cy="619.6" r="1" /><circle cx="181.3" cy="619.6" r="1"/><circle cx="170.3" cy="628" r="1"/><path d="M170.3,611 V624.6 M162.1,621.6 L167.5,626 M178.5,621.6 L173.1,626 M170.3,611.9 L162.0,617.7 M170.3,611.9 L178.6,617.7"/></g>
<line x1="182.60" y1="613.90" x2="194.60" y2="613.90" stroke="#444" stroke-width="1.0" stroke-dasharray="0.7 0.8"/>
<line x1="225.60" y1="613.90" x2="237.60" y2="613.90" stroke="#444" stroke-width="1.0" stroke-dasharray="0.7 0.8"/>
<g fill="none" stroke="#4f4f4f" stroke-width="1.15"><path d="M276.1,611.9 L281.3,617.0 L268.2,631"/><path d="M277.3,631 L293.1,614.6999999999999"/><path d="M304.9,611.9 L299.5,617.0 L312.0,631"/><path d="M302.6,631 L294.2,621.8 M287.7,614.6999999999999 L289.5,616.8"/><path d="M286.3,631 L290.1,626.6 L293.8,631"/></g>
<g fill="none" stroke="#4f4f4f" stroke-width="1.15"><rect x="238.4" y="611.4" width="13.2" height="20.4" rx="1.6"/><rect x="240.3" y="615.2" width="9.2" height="9.6" rx="0.8"/><path d="M242.4,618 H247.4 M242.4,620 H247.4 M242.4,622 H246.0" stroke-width="0.8"/><circle cx="245.0" cy="627.6" r="0.7"/><path d="M253.0,611.4 V615 H259.8 V611.4"/><path d="M259.6,621 V625 H254.6 M258.0,622.6 L259.6,620.8 L261.2,622.6 M256.4,623.4 L254.6,625 L256.4,626.6" stroke-width="0.9"/></g>
<line x1="262.60" y1="613.90" x2="274.60" y2="613.90" stroke="#444" stroke-width="1.0" stroke-dasharray="0.7 0.8"/>
<line x1="305.60" y1="613.90" x2="317.60" y2="613.90" stroke="#444" stroke-width="1.0" stroke-dasharray="0.7 0.8"/>
<g fill="none" stroke="#4f4f4f" stroke-width="1.15"><path d="M356.1,611.9 L361.3,617.0 L348.2,631"/><path d="M357.3,631 L373.1,614.6999999999999"/><path d="M384.9,611.9 L379.5,617.0 L392.0,631"/><path d="M382.6,631 L374.2,621.8 M367.7,614.6999999999999 L369.5,616.8"/><path d="M366.3,631 L370.1,626.6 L373.8,631"/></g>
<g fill="none" stroke="#4f4f4f" stroke-width="1.15"><rect x="320.0" y="612.6" width="20.8" height="14.8" rx="1.4"/><path d="M325.4,615.4 V624.8 M330.4,615.4 V624.8 M335.4,615.4 V624.8"/><path d="M323.8,618.6 H327.0 M328.8,621.8 H332.0 M333.8,618 H337.0" stroke-width="1.6"/></g>
<line x1="342.60" y1="613.90" x2="354.60" y2="613.90" stroke="#444" stroke-width="1.0" stroke-dasharray="0.7 0.8"/>
<line x1="385.60" y1="613.90" x2="397.60" y2="613.90" stroke="#444" stroke-width="1.0" stroke-dasharray="0.7 0.8"/>
<g fill="none" stroke="#4f4f4f" stroke-width="1.15"><path d="M436.1,611.9 L441.3,617.0 L428.2,631"/><path d="M437.3,631 L453.1,614.6999999999999"/><path d="M464.9,611.9 L459.5,617.0 L472.0,631"/><path d="M462.6,631 L454.2,621.8 M447.7,614.6999999999999 L449.5,616.8"/><path d="M446.3,631 L450.1,626.6 L453.8,631"/></g>
<g fill="none" stroke="#4f4f4f" stroke-width="1.15"><rect x="403.8" y="606" width="13.2" height="21.4" rx="1.4"/><path d="M409.8,614 H414.4 M409.8,617.6 H414.4 M409.8,621.2 H414.4"/><path d="M406.2,613.8 l0.8,0.8 l1.2,-1.6 M406.2,617.4 l0.8,0.8 l1.2,-1.6 M406.2,621 l0.8,0.8 l1.2,-1.6" stroke-width="0.8"/></g>
<line x1="422.60" y1="613.90" x2="434.60" y2="613.90" stroke="#444" stroke-width="1.0" stroke-dasharray="0.7 0.8"/>
<line x1="465.60" y1="613.90" x2="477.60" y2="613.90" stroke="#444" stroke-width="1.0" stroke-dasharray="0.7 0.8"/>
<g fill="none" stroke="#4f4f4f" stroke-width="1.15"><path d="M516.1,611.9 L521.3,617.0 L508.2,631"/><path d="M517.3,631 L533.1,614.6999999999999"/><path d="M544.9,611.9 L539.5,617.0 L552.0,631"/><path d="M542.6,631 L534.2,621.8 M527.7,614.6999999999999 L529.5,616.8"/><path d="M526.3,631 L530.1,626.6 L533.8,631"/></g>
<g fill="none" stroke="#4f4f4f" stroke-width="1.15"><ellipse cx="487.6" cy="615.6" rx="6.4" ry="2.2"/><path d="M481.2,615.6 V626.4 M494.0,615.6 V626.4"/><path d="M481.2,619.2 A6.4,2.2 0 0 0 494.0,619.2 M481.2,622.8 A6.4,2.2 0 0 0 494.0,622.8 M481.2,626.4 A6.4,2.2 0 0 0 494.0,626.4"/><path d="M496.0,618 H500.6 M496.0,621 H499.2"/></g>
<line x1="502.60" y1="613.90" x2="514.60" y2="613.90" stroke="#444" stroke-width="1.0" stroke-dasharray="0.7 0.8"/>
<line x1="545.60" y1="613.90" x2="557.60" y2="613.90" stroke="#444" stroke-width="1.0" stroke-dasharray="0.7 0.8"/>
<g fill="none" stroke="#4f4f4f" stroke-width="1.15"><path d="M596.1,611.9 L601.3,617.0 L588.2,631"/><path d="M597.3,631 L613.1,614.6999999999999"/><path d="M624.9,611.9 L619.5,617.0 L632.0,631"/><path d="M622.6,631 L614.2,621.8 M607.7,614.6999999999999 L609.5,616.8"/><path d="M606.3,631 L610.1,626.6 L613.8,631"/></g>
<g fill="none" stroke="#4f4f4f" stroke-width="1.15"><ellipse cx="567.6" cy="615.6" rx="6.4" ry="2.2"/><path d="M561.2,615.6 V626.4 M574.0,615.6 V626.4"/><path d="M561.2,619.2 A6.4,2.2 0 0 0 574.0,619.2 M561.2,622.8 A6.4,2.2 0 0 0 574.0,622.8 M561.2,626.4 A6.4,2.2 0 0 0 574.0,626.4"/><circle cx="575.0" cy="624.4" r="4.2" fill="#272727"/><path d="M575.0,624.4 L577.0,621.8"/></g>
<line x1="582.60" y1="613.90" x2="594.60" y2="613.90" stroke="#444" stroke-width="1.0" stroke-dasharray="0.7 0.8"/>
<line x1="625.60" y1="613.90" x2="637.60" y2="613.90" stroke="#444" stroke-width="1.0" stroke-dasharray="0.7 0.8"/>
<g fill="none" stroke="#4f4f4f" stroke-width="1.15"><path d="M676.1,611.9 L681.3,617.0 L668.2,631"/><path d="M677.3,631 L693.1,614.6999999999999"/><path d="M704.9,611.9 L699.5,617.0 L712.0,631"/><path d="M702.6,631 L694.2,621.8 M687.7,614.6999999999999 L689.5,616.8"/><path d="M686.3,631 L690.1,626.6 L693.8,631"/></g>
<g fill="none" stroke="#4f4f4f" stroke-width="1.15"><rect x="643.0" y="608" width="13.2" height="5" rx="1"/><rect x="643.0" y="614.4" width="13.2" height="5" rx="1"/><path d="M649.6,619.4 V626.4 M641.0,628 H647.6 M651.6,628 H657.6"/><path d="M647.8,628 L649.6,626.2 L651.4,628 L649.6,629.8 Z"/></g>
<line x1="662.60" y1="613.90" x2="674.60" y2="613.90" stroke="#444" stroke-width="1.0" stroke-dasharray="0.7 0.8"/>
<line x1="705.60" y1="613.90" x2="717.60" y2="613.90" stroke="#444" stroke-width="1.0" stroke-dasharray="0.7 0.8"/>
<g fill="none" stroke="#4f4f4f" stroke-width="1.15"><path d="M756.1,611.9 L761.3,617.0 L748.2,631"/><path d="M757.3,631 L773.1,614.6999999999999"/><path d="M784.9,611.9 L779.5,617.0 L792.0,631"/><path d="M782.6,631 L774.2,621.8 M767.7,614.6999999999999 L769.5,616.8"/><path d="M766.3,631 L770.1,626.6 L773.8,631"/></g>
<g fill="none" stroke="#4f4f4f" stroke-width="1.15"><circle cx="722.2" cy="619.6" r="3.3"/><circle cx="744.2" cy="619.6" r="3.3"/><circle cx="733.2" cy="628" r="3.3"/><circle cx="722.2" cy="619.6" r="1" /><circle cx="744.2" cy="619.6" r="1"/><circle cx="733.2" cy="628" r="1"/><path d="M733.2,611 V624.6 M725.0,621.6 L730.4,626 M741.4,621.6 L736.0,626 M733.2,611.9 L724.9,617.7 M733.2,611.9 L741.5,617.7"/></g>
<line x1="742.60" y1="613.90" x2="754.60" y2="613.90" stroke="#444" stroke-width="1.0" stroke-dasharray="0.7 0.8"/>
<line x1="785.60" y1="613.90" x2="797.60" y2="613.90" stroke="#444" stroke-width="1.0" stroke-dasharray="0.7 0.8"/>
<g fill="none" stroke="#4f4f4f" stroke-width="1.15"><path d="M836.1,611.9 L841.3,617.0 L828.2,631"/><path d="M837.3,631 L853.1,614.6999999999999"/><path d="M864.9,611.9 L859.5,617.0 L872.0,631"/><path d="M862.6,631 L854.2,621.8 M847.7,614.6999999999999 L849.5,616.8"/><path d="M846.3,631 L850.1,626.6 L853.8,631"/></g>
<g fill="none" stroke="#4f4f4f" stroke-width="1.15"><rect x="803.4" y="611.4" width="13.2" height="20.4" rx="1.6"/><rect x="805.3" y="615.2" width="9.2" height="9.6" rx="0.8"/><path d="M807.4,618 H812.4 M807.4,620 H812.4 M807.4,622 H811.0" stroke-width="0.8"/><circle cx="810.0" cy="627.6" r="0.7"/><path d="M818.0,611.4 V615 H824.8 V611.4"/><path d="M824.6,621 V625 H819.6 M823.0,622.6 L824.6,620.8 L826.2,622.6 M821.4,623.4 L819.6,625 L821.4,626.6" stroke-width="0.9"/></g>
<line x1="822.60" y1="613.90" x2="834.60" y2="613.90" stroke="#444" stroke-width="1.0" stroke-dasharray="0.7 0.8"/>
<line x1="865.60" y1="613.90" x2="877.60" y2="613.90" stroke="#444" stroke-width="1.0" stroke-dasharray="0.7 0.8"/>
<g fill="none" stroke="#4f4f4f" stroke-width="1.15"><path d="M916.1,611.9 L921.3,617.0 L908.2,631"/><path d="M917.3,631 L933.1,614.6999999999999"/><path d="M944.9,611.9 L939.5,617.0 L952.0,631"/><path d="M942.6,631 L934.2,621.8 M927.7,614.6999999999999 L929.5,616.8"/><path d="M926.3,631 L930.1,626.6 L933.8,631"/></g>
<g fill="none" stroke="#4f4f4f" stroke-width="1.15"><rect x="884.4" y="612.6" width="20.8" height="14.8" rx="1.4"/><path d="M889.8,615.4 V624.8 M894.8,615.4 V624.8 M899.8,615.4 V624.8"/><path d="M888.2,618.6 H891.4 M893.2,621.8 H896.4 M898.2,618 H901.4" stroke-width="1.6"/></g>
<line x1="902.60" y1="613.90" x2="914.60" y2="613.90" stroke="#444" stroke-width="1.0" stroke-dasharray="0.7 0.8"/>
<line x1="945.60" y1="613.90" x2="957.60" y2="613.90" stroke="#444" stroke-width="1.0" stroke-dasharray="0.7 0.8"/>
<g fill="none" stroke="#4f4f4f" stroke-width="1.15"><path d="M996.1,611.9 L1001.3,617.0 L988.2,631"/><path d="M997.3,631 L1013.1,614.6999999999999"/><path d="M1024.9,611.9 L1019.5,617.0 L1032.0,631"/><path d="M1022.6,631 L1014.2,621.8 M1007.7,614.6999999999999 L1009.5,616.8"/><path d="M1006.3,631 L1010.1,626.6 L1013.8,631"/></g>
<g fill="none" stroke="#4f4f4f" stroke-width="1.15"><rect x="966.8" y="606" width="13.2" height="21.4" rx="1.4"/><path d="M972.8,614 H977.4 M972.8,617.6 H977.4 M972.8,621.2 H977.4"/><path d="M969.2,613.8 l0.8,0.8 l1.2,-1.6 M969.2,617.4 l0.8,0.8 l1.2,-1.6 M969.2,621 l0.8,0.8 l1.2,-1.6" stroke-width="0.8"/></g>
<line x1="982.60" y1="613.90" x2="994.60" y2="613.90" stroke="#444" stroke-width="1.0" stroke-dasharray="0.7 0.8"/>
<line x1="1025.60" y1="613.90" x2="1037.60" y2="613.90" stroke="#444" stroke-width="1.0" stroke-dasharray="0.7 0.8"/>
</g>
</svg>
</body></html>
